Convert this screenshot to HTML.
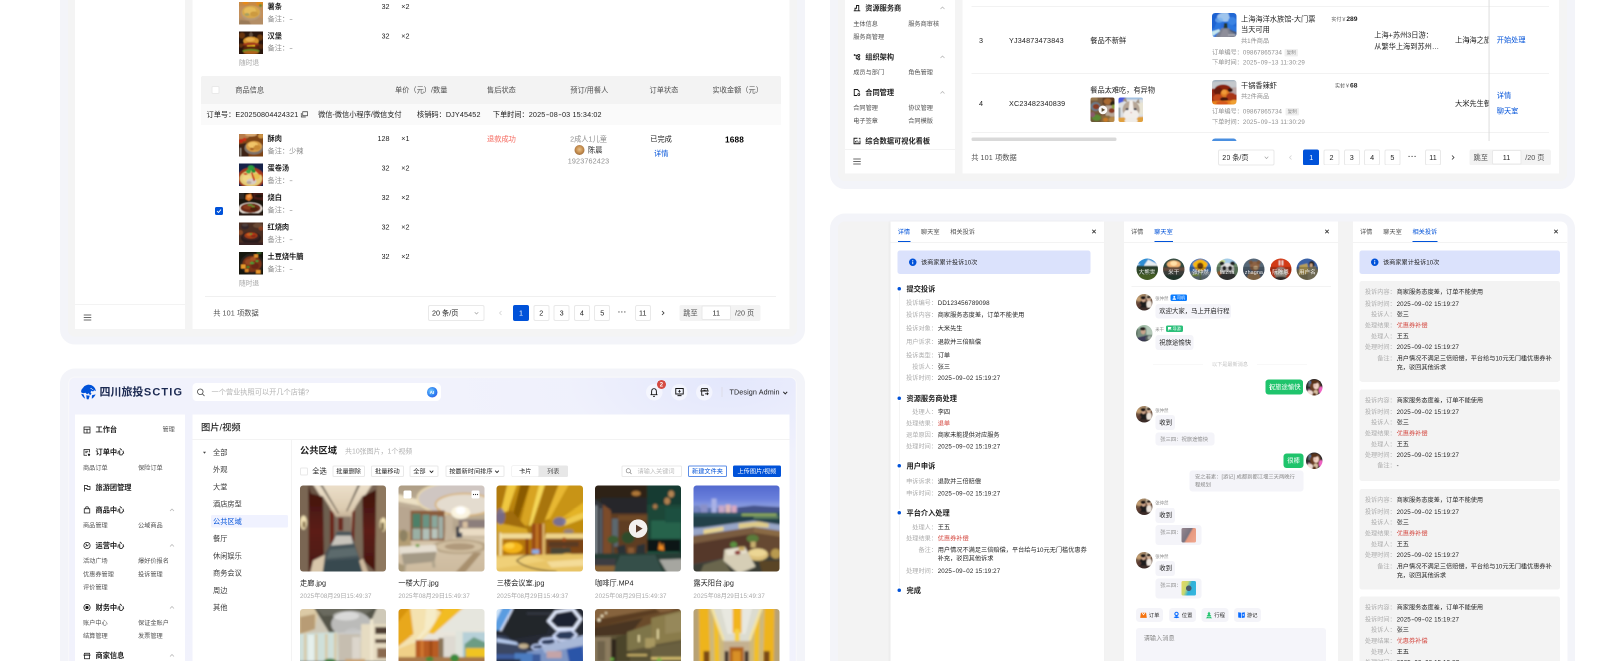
<!DOCTYPE html>
<html lang="zh-CN"><head><meta charset="utf-8"><title>UI</title><style>
html,body{margin:0;padding:0;background:#fff;}
body{width:1623px;height:661px;overflow:hidden;position:relative;font-family:"Liberation Sans","Noto Sans CJK SC",sans-serif;}
#s{will-change:transform;position:absolute;left:0;top:0;width:3246px;height:1322px;transform:scale(.5);transform-origin:0 0;overflow:hidden;}
.b{position:absolute;display:block;}
.t{position:absolute;white-space:nowrap;line-height:20px;}
.n{letter-spacing:.02em;}
.h{display:inline-block;width:.58em;text-align:center;transform:scaleX(1.5);letter-spacing:0;}
</style></head><body><svg width="0" height="0" style="position:absolute"><defs><filter id="bl" x="-5%" y="-5%" width="110%" height="110%"><feGaussianBlur stdDeviation="2.3"/></filter><filter id="bs" x="-5%" y="-5%" width="110%" height="110%"><feGaussianBlur stdDeviation="1.2"/></filter></defs></svg><div id="s">
<div class="b" style="left:120px;top:-100px;width:1490px;height:788.6px;background:#f4f4f4;border:16px solid #f3f4f9;border-radius:30px;box-sizing:border-box;"></div>
<div class="b" style="left:150px;top:-60px;width:219.5px;height:717.5px;background:#fff;"></div>
<div class="b" style="left:150px;top:608px;width:219.5px;height:2px;background:#f3f3f3;"></div>
<svg class="b" style="left:167px;top:627.5px;" width="16" height="14" viewBox="0 0 16 14"><path d="M0.5 2 H15.5 M0.5 7 H15.5 M0.5 12 H15.5" stroke="#3a3a3a" stroke-width="1.7" fill="none"/></svg>
<div class="b" style="left:385px;top:-60px;width:1193.5px;height:717.5px;background:#fff;"></div>
<svg class="b" style="left:478px;top:4px;" width="48" height="45" viewBox="0 0 48 45"><g filter="url(#bs)"><rect x="-6" y="-6" width="60" height="57" fill="#c4905a"/><rect x="-6" y="-6" width="60" height="14" fill="#c88a44"/><ellipse cx="13" cy="1" rx="6" ry="4" fill="#e88a18"/><ellipse cx="41" cy="3" rx="7" ry="5" fill="#e08a1c"/><ellipse cx="43" cy="7" rx="3" ry="3" fill="#6a8a30"/><rect x="-6" y="32" width="60" height="20" fill="#b48e66"/><ellipse cx="24" cy="22" rx="20" ry="15" fill="#b89a74"/><ellipse cx="24" cy="20" rx="18" ry="12.5" fill="#d8a84c"/><ellipse cx="22" cy="18" rx="12" ry="8" fill="#e6bc5c"/><ellipse cx="30" cy="24" rx="8" ry="5" fill="#cc9a40"/><ellipse cx="16" cy="25" rx="5" ry="3" fill="#a8a060"/><polygon points="2,36 20,38 24,45 0,45" fill="#9a7a58"/></g></svg>
<div class="t" style="left:535px;top:3px;font-size:14.42px;color:#1f1f1f;font-weight:600;">薯条</div>
<div class="t" style="left:535px;top:27.5px;font-size:14.42px;color:#909090;">备注：<span class="h">-</span></div>
<div class="t" style="left:779px;top:3px;font-size:14.42px;color:#1f1f1f;transform:translateX(-100%);">32</div>
<div class="t" style="left:802.5px;top:3px;font-size:14.42px;color:#1f1f1f;">×2</div>
<svg class="b" style="left:478px;top:62.5px;" width="48" height="45" viewBox="0 0 48 45"><g filter="url(#bs)"><rect x="-6" y="-6" width="60" height="57" fill="#2a1508"/><ellipse cx="6" cy="8" rx="6" ry="6" fill="#7a3e0c" fill-opacity="0.8"/><ellipse cx="42" cy="12" rx="6" ry="6" fill="#8a4a10" fill-opacity="0.7"/><ellipse cx="44" cy="30" rx="5" ry="5" fill="#6a3408" fill-opacity="0.7"/><ellipse cx="4" cy="28" rx="4" ry="4" fill="#7a400c" fill-opacity="0.7"/><polygon points="20,6 24,0 28,6 26,12 22,12" fill="#9a8a78" fill-opacity="0.5"/><ellipse cx="24" cy="19" rx="15.5" ry="8.5" fill="#d6922c"/><ellipse cx="22" cy="16" rx="9" ry="4" fill="#eab050"/><ellipse cx="24" cy="27" rx="17" ry="5" fill="#6e2a10"/><ellipse cx="24" cy="25" rx="16" ry="2.5" fill="#a83a1c"/><polygon points="16,28 32,27 30,36 26,34 24,40 21,33 18,36" fill="#f2c01e"/><ellipse cx="24" cy="34" rx="16" ry="4.5" fill="#5a2410"/><ellipse cx="24" cy="39" rx="17" ry="4" fill="#6a8a24"/><ellipse cx="24" cy="42" rx="15" ry="3.5" fill="#b0641e"/></g></svg>
<div class="t" style="left:535px;top:61.5px;font-size:14.42px;color:#1f1f1f;font-weight:600;">汉堡</div>
<div class="t" style="left:535px;top:86px;font-size:14.42px;color:#909090;">备注：<span class="h">-</span></div>
<div class="t" style="left:779px;top:61.5px;font-size:14.42px;color:#1f1f1f;transform:translateX(-100%);">32</div>
<div class="t" style="left:802.5px;top:61.5px;font-size:14.42px;color:#1f1f1f;">×2</div>
<div class="t" style="left:478px;top:116px;font-size:13.39px;color:#a6a6a6;">随时退</div>
<div class="b" style="left:402px;top:152px;width:1160px;height:56px;background:#f3f3f3;border-radius:4px 4px 0 0;"></div>
<div class="b" style="left:402px;top:208px;width:1160px;height:42px;background:#fafafa;"></div>
<div class="b" style="left:423px;top:172px;width:16px;height:16px;background:#fff;border:2px solid #e9e9e9;border-radius:3px;box-sizing:border-box;"></div>
<div class="t" style="left:470.5px;top:170px;font-size:14.42px;color:#505050;">商品信息</div>
<div class="t" style="left:790px;top:170px;font-size:14.42px;color:#505050;">单价（元）/数量</div>
<div class="t" style="left:974px;top:170px;font-size:14.42px;color:#505050;">售后状态</div>
<div class="t" style="left:1140.5px;top:170px;font-size:14.42px;color:#505050;">预订/用餐人</div>
<div class="t" style="left:1299px;top:170px;font-size:14.42px;color:#505050;">订单状态</div>
<div class="t" style="left:1425px;top:170px;font-size:14.42px;color:#505050;">实收金额（元）</div>
<div class="t" style="left:413px;top:218.6px;font-size:14.42px;color:#1f1f1f;">订单号：<span class="n">E20250804424321</span></div>
<svg class="b" style="left:601px;top:220.1px;" width="16" height="15" viewBox="0 0 16 15"><path d="M4.5 3.5 H14 V11.5 H4.5 Z M1.5 6 V14 H10.5" fill="none" stroke="#333" stroke-width="1.3"/></svg>
<div class="t" style="left:636px;top:218.6px;font-size:14.42px;color:#1f1f1f;">微信-微信小程序/微信支付</div>
<div class="t" style="left:834px;top:218.6px;font-size:14.42px;color:#1f1f1f;">核销码：<span class="n">DJY45452</span></div>
<div class="t" style="left:985.5px;top:218.6px;font-size:14.42px;color:#1f1f1f;">下单时间：<span class="n">2025<span class="h">-</span>08<span class="h">-</span>03 15:34:02</span></div>
<svg class="b" style="left:478px;top:268px;" width="48" height="45" viewBox="0 0 48 45"><g filter="url(#bs)"><rect x="-6" y="-6" width="60" height="57" fill="#7e4418"/><polygon points="-6,-6 30,-6 18,8 -6,12" fill="#b87c48"/><ellipse cx="24" cy="1" rx="12" ry="4" fill="#d8a870"/><ellipse cx="44" cy="4" rx="6" ry="5" fill="#e0a850" fill-opacity="0.8"/><ellipse cx="4" cy="14" rx="4" ry="4" fill="#c42a18"/><ellipse cx="11" cy="11" rx="3.5" ry="3.5" fill="#cc3018"/><polygon points="-6,22 14,18 20,45 -6,50" fill="#3c2412"/><ellipse cx="30" cy="28" rx="19" ry="13" fill="#7e746c"/><ellipse cx="30" cy="25" rx="16" ry="11" fill="#d89c44"/><ellipse cx="28" cy="22" rx="10" ry="6" fill="#f0c468"/><ellipse cx="36" cy="27" rx="7" ry="5" fill="#c88a34"/><ellipse cx="26" cy="30" rx="4" ry="2.5" fill="#a86424"/><rect x="2" y="28" width="2.5" height="16" fill="#b8b0a8" fill-opacity="0.8"/></g></svg>
<div class="t" style="left:535px;top:267px;font-size:14.42px;color:#1f1f1f;font-weight:600;">酥肉</div>
<div class="t" style="left:535px;top:291.5px;font-size:14.42px;color:#909090;">备注：少辣</div>
<div class="t" style="left:779px;top:267px;font-size:14.42px;color:#1f1f1f;transform:translateX(-100%);">128</div>
<div class="t" style="left:802.5px;top:267px;font-size:14.42px;color:#1f1f1f;">×1</div>
<svg class="b" style="left:478px;top:327px;" width="48" height="45" viewBox="0 0 48 45"><g filter="url(#bs)"><rect x="-6" y="-6" width="60" height="57" fill="#13234a"/><ellipse cx="24" cy="29" rx="27" ry="21" fill="#a23c1c"/><ellipse cx="24" cy="30" rx="22.5" ry="16" fill="#e6cc78"/><ellipse cx="16" cy="30" rx="9" ry="8" fill="#f0d884"/><ellipse cx="34" cy="26" rx="8" ry="6" fill="#e8c050"/><ellipse cx="25" cy="36" rx="10" ry="6" fill="#d6cec6"/><ellipse cx="20" cy="38" rx="5" ry="3" fill="#b8a8a0"/><ellipse cx="24" cy="9" rx="6.5" ry="5.5" fill="#2e9c3c"/><ellipse cx="19" cy="16" rx="5" ry="4" fill="#3aa844"/><ellipse cx="29" cy="15" rx="4" ry="3.5" fill="#249034"/><polygon points="24,18 27,18 32,34 29,35" fill="#c8281a"/><polygon points="32,14 35,13 44,22 41,23" fill="#c8301c"/><polygon points="8,20 14,19 18,22 12,23" fill="#d23a20"/></g></svg>
<div class="t" style="left:535px;top:326px;font-size:14.42px;color:#1f1f1f;font-weight:600;">蛋卷汤</div>
<div class="t" style="left:535px;top:350.5px;font-size:14.42px;color:#909090;">备注：<span class="h">-</span></div>
<div class="t" style="left:779px;top:326px;font-size:14.42px;color:#1f1f1f;transform:translateX(-100%);">32</div>
<div class="t" style="left:802.5px;top:326px;font-size:14.42px;color:#1f1f1f;">×2</div>
<svg class="b" style="left:478px;top:386px;" width="48" height="45" viewBox="0 0 48 45"><g filter="url(#bs)"><rect x="-6" y="-6" width="60" height="57" fill="#1f1410"/><polygon points="26,-6 54,-6 54,16 30,12" fill="#4a1a14"/><ellipse cx="40" cy="6" rx="8" ry="3" fill="#1a1210"/><rect x="0" y="0" width="10" height="12" fill="#3a3430" fill-opacity="0.7"/><polygon points="14,4 24,1 27,10 20,16 13,12" fill="#e07a2a"/><polygon points="16,5 23,3 24,8 18,10" fill="#f0a050"/><ellipse cx="23" cy="31" rx="24" ry="12" fill="#e6dcd2"/><ellipse cx="23" cy="30" rx="20" ry="9.5" fill="#6c2c14"/><ellipse cx="20" cy="28" rx="12" ry="5" fill="#8a3a1a"/><ellipse cx="30" cy="32" rx="8" ry="4" fill="#4e2010"/><ellipse cx="22" cy="24" rx="5" ry="2" fill="#5a8a30"/><ellipse cx="28" cy="27" rx="3" ry="1.5" fill="#6a9a34"/><rect x="-6" y="40" width="60" height="10" fill="#2a1c14"/></g></svg>
<div class="t" style="left:535px;top:385px;font-size:14.42px;color:#1f1f1f;font-weight:600;">烧白</div>
<div class="t" style="left:535px;top:409.5px;font-size:14.42px;color:#909090;">备注：<span class="h">-</span></div>
<div class="t" style="left:779px;top:385px;font-size:14.42px;color:#1f1f1f;transform:translateX(-100%);">32</div>
<div class="t" style="left:802.5px;top:385px;font-size:14.42px;color:#1f1f1f;">×2</div>
<svg class="b" style="left:478px;top:445px;" width="48" height="45" viewBox="0 0 48 45"><g filter="url(#bs)"><rect x="-6" y="-6" width="60" height="57" fill="#4c2e22"/><ellipse cx="12" cy="8" rx="8" ry="6" fill="#34282a"/><ellipse cx="12" cy="5" rx="6" ry="3" fill="#50403c"/><ellipse cx="38" cy="6" rx="10" ry="5" fill="#6a4a34"/><ellipse cx="44" cy="12" rx="5" ry="4" fill="#a84a20" fill-opacity="0.7"/><ellipse cx="2" cy="20" rx="6" ry="5" fill="#8a4a28"/><ellipse cx="24" cy="31" rx="20" ry="12" fill="#2a1c1a"/><ellipse cx="24" cy="28" rx="17" ry="8" fill="#3c2420"/><ellipse cx="24" cy="26" rx="13" ry="6.5" fill="#a23c18"/><ellipse cx="20" cy="24" rx="5" ry="3" fill="#c85a20"/><ellipse cx="29" cy="27" rx="5" ry="3" fill="#8a2c12"/><ellipse cx="24" cy="23" rx="3" ry="1.5" fill="#5a9a30"/><ellipse cx="28" cy="24" rx="2" ry="1.2" fill="#d82818"/><rect x="-6" y="40" width="60" height="10" fill="#382420"/></g></svg>
<div class="t" style="left:535px;top:444px;font-size:14.42px;color:#1f1f1f;font-weight:600;">红烧肉</div>
<div class="t" style="left:535px;top:468.5px;font-size:14.42px;color:#909090;">备注：<span class="h">-</span></div>
<div class="t" style="left:779px;top:444px;font-size:14.42px;color:#1f1f1f;transform:translateX(-100%);">32</div>
<div class="t" style="left:802.5px;top:444px;font-size:14.42px;color:#1f1f1f;">×2</div>
<svg class="b" style="left:478px;top:504px;" width="48" height="45" viewBox="0 0 48 45"><g filter="url(#bs)"><rect x="-6" y="-6" width="60" height="57" fill="#151310"/><ellipse cx="26" cy="24" rx="24" ry="21" fill="#26201c"/><ellipse cx="26" cy="24" rx="19" ry="16" fill="#7c3418"/><ellipse cx="20" cy="20" rx="8" ry="6" fill="#9a4a24"/><ellipse cx="32" cy="28" rx="8" ry="6" fill="#6a2812"/><ellipse cx="28" cy="14" rx="6" ry="4" fill="#a85428"/><rect x="4" y="25" width="9" height="8" fill="#e89a2a"/><rect x="30" y="5" width="8" height="6" fill="#e0902a"/><rect x="34" y="36" width="9" height="7" fill="#e8942a"/><rect x="12" y="34" width="7" height="6" fill="#d88424"/><ellipse cx="26" cy="22" rx="4" ry="2.5" fill="#4a9a34"/><ellipse cx="18" cy="30" rx="3" ry="2" fill="#3a8a2c"/><ellipse cx="36" cy="18" rx="3" ry="2" fill="#4a9a34"/><ellipse cx="40" cy="2" rx="5" ry="3" fill="#3a6a2a" fill-opacity="0.8"/></g></svg>
<div class="t" style="left:535px;top:503px;font-size:14.42px;color:#1f1f1f;font-weight:600;">土豆烧牛腩</div>
<div class="t" style="left:535px;top:527.5px;font-size:14.42px;color:#909090;">备注：<span class="h">-</span></div>
<div class="t" style="left:779px;top:503px;font-size:14.42px;color:#1f1f1f;transform:translateX(-100%);">32</div>
<div class="t" style="left:802.5px;top:503px;font-size:14.42px;color:#1f1f1f;">×2</div>
<div class="t" style="left:478px;top:557px;font-size:13.39px;color:#a6a6a6;">随时退</div>
<div class="b" style="left:430px;top:413.5px;width:16px;height:16px;background:#0052d9;border-radius:3px;"></div>
<svg class="b" style="left:430px;top:413.5px;" width="16" height="16" viewBox="0 0 16 16"><path d="M4 8.2 L7 11 L12 5.2" fill="none" stroke="#fff" stroke-width="1.8"/></svg>
<div class="t" style="left:974px;top:267.8px;font-size:14.42px;color:#f6685d;">退款成功</div>
<div class="t" style="left:1177px;top:267.8px;font-size:14.42px;color:#909090;transform:translateX(-50%);">2成人1儿童</div>
<div class="b" style="left:1148.5px;top:290px;width:20px;height:20px;background:radial-gradient(circle at 50% 45%,#e8c088 0%,#c89050 45%,#7a5030 100%);border-radius:50%;"></div>
<div class="t" style="left:1176px;top:290.2px;font-size:14.42px;color:#1f1f1f;">陈晨</div>
<div class="t" style="left:1177px;top:312.4px;font-size:14.42px;color:#909090;transform:translateX(-50%);"><span class="n">1923762423</span></div>
<div class="t" style="left:1300.5px;top:267.8px;font-size:14.42px;color:#1f1f1f;">已完成</div>
<div class="t" style="left:1308px;top:296.6px;font-size:14.42px;color:#0052d9;">详情</div>
<div class="t" style="left:1469px;top:268.6px;font-size:16.48px;color:#000;font-weight:600;transform:translateX(-50%);"><span class="n">1688</span></div>
<div class="b" style="left:410px;top:592px;width:1142px;height:2px;background:#f0f0f0;"></div>
<div class="t" style="left:426.5px;top:615.6px;font-size:14.42px;color:#505050;">共 <span class="n">101 </span>项数据</div>
<div class="b" style="left:856px;top:609.6px;width:113px;height:32px;background:#fff;border:2px solid #e9e9e9;border-radius:4px;box-sizing:border-box;"></div>
<div class="t" style="left:864px;top:615.6px;font-size:14.42px;color:#1f1f1f;">20 条/页</div>
<svg class="b" style="left:946.5px;top:620.1px;" width="12" height="12" viewBox="0 0 12 12"><path d="M2.4 4.32 L6 8.16 L9.6 4.32" fill="none" stroke="#999" stroke-width="1.3"/></svg>
<svg class="b" style="left:995px;top:619.6px;" width="12" height="12" viewBox="0 0 12 12"><path d="M8 2 L4 6 L8 10" fill="none" stroke="#d0d0d0" stroke-width="1.4"/></svg>
<div class="b" style="left:1026px;top:609.6px;width:32px;height:32px;background:#0052d9;border-radius:4px;"></div>
<div class="t" style="left:1042px;top:615.6px;font-size:14.42px;color:#fff;transform:translateX(-50%);">1</div>
<div class="b" style="left:1066.6px;top:609.6px;width:32px;height:32px;background:#fff;border:2px solid #e9e9e9;border-radius:4px;box-sizing:border-box;"></div>
<div class="t" style="left:1082.6px;top:615.6px;font-size:14.42px;color:#1f1f1f;transform:translateX(-50%);">2</div>
<div class="b" style="left:1107.2px;top:609.6px;width:32px;height:32px;background:#fff;border:2px solid #e9e9e9;border-radius:4px;box-sizing:border-box;"></div>
<div class="t" style="left:1123.2px;top:615.6px;font-size:14.42px;color:#1f1f1f;transform:translateX(-50%);">3</div>
<div class="b" style="left:1147.8px;top:609.6px;width:32px;height:32px;background:#fff;border:2px solid #e9e9e9;border-radius:4px;box-sizing:border-box;"></div>
<div class="t" style="left:1163.8px;top:615.6px;font-size:14.42px;color:#1f1f1f;transform:translateX(-50%);">4</div>
<div class="b" style="left:1188.4px;top:609.6px;width:32px;height:32px;background:#fff;border:2px solid #e9e9e9;border-radius:4px;box-sizing:border-box;"></div>
<div class="t" style="left:1204.4px;top:615.6px;font-size:14.42px;color:#1f1f1f;transform:translateX(-50%);">5</div>
<div class="t" style="left:1244.6px;top:614.1px;font-size:15.45px;color:#444;font-weight:700;transform:translateX(-50%);letter-spacing:0.8px;">···</div>
<div class="b" style="left:1269.6px;top:609.6px;width:32px;height:32px;background:#fff;border:2px solid #e9e9e9;border-radius:4px;box-sizing:border-box;"></div>
<div class="t" style="left:1285.6px;top:615.6px;font-size:14.42px;color:#1f1f1f;transform:translateX(-50%);">11</div>
<svg class="b" style="left:1320px;top:619.6px;" width="12" height="12" viewBox="0 0 12 12"><path d="M4 2 L8 6 L4 10" fill="none" stroke="#333" stroke-width="1.6"/></svg>
<div class="b" style="left:1358.6px;top:609.6px;width:162px;height:32px;background:#f3f3f3;border-radius:4px;"></div>
<div class="t" style="left:1366.6px;top:615.6px;font-size:14.42px;color:#505050;">跳至</div>
<div class="b" style="left:1403.1px;top:611.1px;width:59px;height:29px;background:#fff;border:2px solid #e9e9e9;border-radius:3px;box-sizing:border-box;"></div>
<div class="t" style="left:1432.6px;top:615.6px;font-size:14.42px;color:#1f1f1f;transform:translateX(-50%);">11</div>
<div class="t" style="left:1470.1px;top:615.6px;font-size:14.42px;color:#505050;">/20 页</div>
<div class="b" style="left:1659.5px;top:-100px;width:1490.5px;height:478px;background:#f4f4f4;border:16px solid #f3f4f9;border-radius:30px;box-sizing:border-box;"></div>
<div class="b" style="left:1690px;top:-60px;width:219.5px;height:407px;background:#fff;"></div>
<svg class="b" style="left:1706px;top:7.6px;" width="16" height="16" viewBox="0 0 16 16"><path d="M1.5 13.6 H14.5 M4 13 V8.5 H7 V3 H11.5 V13" fill="none" stroke="#161616" stroke-width="1.8"/></svg>
<div class="t" style="left:1730.5px;top:5.6px;font-size:14.42px;color:#1f1f1f;font-weight:600;">资源服务商</div>
<svg class="b" style="left:1878.5px;top:9.6px;" width="12" height="12" viewBox="0 0 12 12"><path d="M2 8 L6 4 L10 8" fill="none" stroke="#b0b0b0" stroke-width="1.3"/></svg>
<div class="t" style="left:1706.5px;top:38.1px;font-size:12.36px;color:#505050;">主体信息</div>
<div class="t" style="left:1816.5px;top:38.1px;font-size:12.36px;color:#505050;">服务商审核</div>
<div class="t" style="left:1706.5px;top:63.9px;font-size:12.36px;color:#505050;">服务商管理</div>
<svg class="b" style="left:1706px;top:105.6px;" width="16" height="16" viewBox="0 0 16 16"><circle cx="3.2" cy="4" r="1.8" fill="#161616"/><circle cx="11.5" cy="5" r="2.1" fill="none" stroke="#161616" stroke-width="1.7"/><circle cx="11.5" cy="11.5" r="2.1" fill="none" stroke="#161616" stroke-width="1.7"/><path d="M5 4.5 H9.3 M6.5 4.5 V11.5 H9.3" fill="none" stroke="#161616" stroke-width="1.6"/></svg>
<div class="t" style="left:1730.5px;top:103.6px;font-size:14.42px;color:#1f1f1f;font-weight:600;">组织架构</div>
<svg class="b" style="left:1878.5px;top:107.6px;" width="12" height="12" viewBox="0 0 12 12"><path d="M2 8 L6 4 L10 8" fill="none" stroke="#b0b0b0" stroke-width="1.3"/></svg>
<div class="t" style="left:1706.5px;top:134.9px;font-size:12.36px;color:#505050;">成员与部门</div>
<div class="t" style="left:1816.5px;top:134.9px;font-size:12.36px;color:#505050;">角色管理</div>
<svg class="b" style="left:1706px;top:176.8px;" width="16" height="16" viewBox="0 0 16 16"><path d="M8 14 H2.5 V2 H9 L12.5 5.5 V8" fill="none" stroke="#161616" stroke-width="1.8"/><circle cx="11.5" cy="12" r="2" fill="none" stroke="#161616" stroke-width="1.7"/></svg>
<div class="t" style="left:1730.5px;top:174.8px;font-size:14.42px;color:#1f1f1f;font-weight:600;">合同管理</div>
<svg class="b" style="left:1878.5px;top:178.8px;" width="12" height="12" viewBox="0 0 12 12"><path d="M2 8 L6 4 L10 8" fill="none" stroke="#b0b0b0" stroke-width="1.3"/></svg>
<div class="t" style="left:1706.5px;top:206.1px;font-size:12.36px;color:#505050;">合同管理</div>
<div class="t" style="left:1816.5px;top:206.1px;font-size:12.36px;color:#505050;">协议管理</div>
<div class="t" style="left:1706.5px;top:232.3px;font-size:12.36px;color:#505050;">电子签章</div>
<div class="t" style="left:1816.5px;top:232.3px;font-size:12.36px;color:#505050;">合同模版</div>
<svg class="b" style="left:1706px;top:273.6px;" width="16" height="16" viewBox="0 0 16 16"><path d="M9 2.5 H2 V13.5 H14 V7" fill="none" stroke="#161616" stroke-width="1.8"/><path d="M5 11 V8 M8 11 V6.5 M11 11 V9.5 M11.5 2.5 H14 V5" fill="none" stroke="#161616" stroke-width="1.6"/></svg>
<div class="t" style="left:1730.5px;top:271.6px;font-size:14.42px;color:#1f1f1f;font-weight:600;">综合数据可视化看板</div>
<div class="b" style="left:1690px;top:298px;width:219.5px;height:2px;background:#f3f3f3;"></div>
<svg class="b" style="left:1706px;top:315.6px;" width="16" height="14" viewBox="0 0 16 14"><path d="M0.5 2 H15.5 M0.5 7 H15.5 M0.5 12 H15.5" stroke="#3a3a3a" stroke-width="1.7" fill="none"/></svg>
<div class="b" style="left:1924.5px;top:-60px;width:1193px;height:407px;background:#fff;"></div>
<div class="b" style="left:0px;top:-60px;width:3246px;height:341.5px;overflow:hidden;"><div class="b" style="left:0px;top:60px;width:3246px;height:400px;"><div class="b" style="left:1942.5px;top:11.9px;width:1155px;height:2px;background:#f2f2f2;"></div>
<div class="b" style="left:1942.5px;top:146.1px;width:1155px;height:2px;background:#f2f2f2;"></div>
<div class="b" style="left:1942.5px;top:264.3px;width:1155px;height:2px;background:#f2f2f2;"></div>
<div class="t" style="left:1958px;top:71.2px;font-size:14.42px;color:#1f1f1f;">3</div>
<div class="t" style="left:2018px;top:71.2px;font-size:14.42px;color:#1f1f1f;letter-spacing:0.35px;">YJ34873473843</div>
<div class="t" style="left:2180.5px;top:71.2px;font-size:14.42px;color:#1f1f1f;">餐品不新鲜</div>
<svg class="b" style="left:2424px;top:25.8px;border-radius:6px;" width="48.5" height="48.5" viewBox="0 0 48 48"><g filter="url(#bs)"><rect x="-6" y="-6" width="60" height="60" fill="#2a76de"/><polygon points="-6,-6 20,-6 4,30 -6,34" fill="#1c62d2"/><ellipse cx="26" cy="8" rx="16" ry="9" fill="#b4d4f0" fill-opacity="0.85"/><ellipse cx="14" cy="14" rx="8" ry="5" fill="#78b0ee" fill-opacity="0.7"/><polygon points="30,-6 54,-6 54,30 40,24" fill="#2468d4"/><ellipse cx="40" cy="16" rx="8" ry="8" fill="#3a84e4"/><ellipse cx="22" cy="26" rx="5" ry="6" fill="#2c6ad8"/><polygon points="24,20 30,20 31,31 23,31" fill="#26382c"/><polygon points="19,30 33,30 54,50 2,54" fill="#7c808e"/><polygon points="22,32 30,32 36,50 14,50" fill="#8e8e9a"/><polygon points="-6,38 14,32 16,36 -6,50" fill="#c4e6ee"/><polygon points="34,32 54,40 54,46 36,36" fill="#4a5a7a"/><rect x="32" y="42" width="14" height="3" fill="#c8c8d0" fill-opacity="0.6"/></g></svg>
<div class="t" style="left:2482px;top:27.6px;font-size:14.42px;color:#1f1f1f;">上海海洋水族馆-大门票</div>
<div class="t" style="left:2482px;top:49.4px;font-size:14.42px;color:#1f1f1f;">当天可用</div>
<div class="t" style="left:2482px;top:71.7px;font-size:12.36px;color:#909090;">共1件商品</div>
<div class="t" style="left:2424px;top:95.3px;font-size:12.36px;color:#909090;">订单编号：<span class="n">09867865734</span></div>
<div class="b" style="left:2569px;top:97.5px;width:27px;height:15px;background:#f0f0f0;border-radius:2px;"></div>
<div class="t" style="left:2582.5px;top:95.3px;font-size:9.27px;color:#8a8a8a;transform:translateX(-50%);">复制</div>
<div class="t" style="left:2424px;top:114.7px;font-size:12.36px;color:#909090;">下单时间：<span class="n">2025<span class="h">-</span>09<span class="h">-</span>13 11:30:29</span></div>
<div class="t" style="left:2715px;top:28.1px;font-size:13.39px;color:#1f1f1f;transform:translateX(-100%);"><span style="font-size:10px;color:#555">实付￥</span><b style="font-weight:600">289</b></div>
<div class="t" style="left:2748.5px;top:60.2px;font-size:14.42px;color:#1f1f1f;">上海+苏州3日游：</div>
<div class="t" style="left:2748.5px;top:82.6px;font-size:14.42px;color:#1f1f1f;">从繁华上海到苏州…</div>
<div class="b" style="left:2910px;top:60px;width:67.5px;height:40px;overflow:hidden;"><div class="t" style="left:0px;top:10.4px;font-size:14.42px;color:#1f1f1f;">上海海之旅</div></div>
<div class="t" style="left:2993.5px;top:70.4px;font-size:14.42px;color:#0052d9;">开始处理</div>
<div class="t" style="left:1958px;top:197.2px;font-size:14.42px;color:#1f1f1f;">4</div>
<div class="t" style="left:2018px;top:197.2px;font-size:14.42px;color:#1f1f1f;letter-spacing:0.35px;">XC23482340839</div>
<div class="t" style="left:2180.5px;top:170.2px;font-size:14.42px;color:#1f1f1f;">餐品太难吃，有异物</div>
<svg class="b" style="left:2180.5px;top:195.4px;border-radius:4px;" width="48.5" height="48.5" viewBox="0 0 48 48"><g filter="url(#bs)"><rect x="-6" y="-6" width="60" height="60" fill="#7a5c3c"/><ellipse cx="10" cy="18" rx="10" ry="9" fill="#6a7e8c"/><ellipse cx="11" cy="18" rx="6.5" ry="5.5" fill="#8a3c24"/><rect x="24" y="-6" width="30" height="20" fill="#5a3a24"/><ellipse cx="34" cy="8" rx="8" ry="6" fill="#a86a30"/><ellipse cx="44" cy="12" rx="5" ry="5" fill="#2a2018"/><rect x="30" y="16" width="24" height="22" fill="#b8a89a"/><ellipse cx="42" cy="26" rx="6" ry="5" fill="#8a3a20"/><ellipse cx="46" cy="18" rx="4" ry="4" fill="#8aa040"/><rect x="-6" y="30" width="26" height="24" fill="#6a5a34"/><ellipse cx="12" cy="40" rx="9" ry="6" fill="#5a8a30"/><ellipse cx="4" cy="34" rx="5" ry="5" fill="#8a5a6a"/><rect x="22" y="36" width="16" height="18" fill="#8a6a3a"/><ellipse cx="44" cy="44" rx="8" ry="6" fill="#b88a4a"/><ellipse cx="30" cy="44" rx="5" ry="4" fill="#c87a28"/><rect x="-6" y="-6" width="20" height="12" fill="#9a7a50"/></g><circle cx="24.5" cy="24.5" r="8.6" fill="#fff" fill-opacity=".95"/><path d="M22 20.5 L29 24.5 L22 28.5 Z" fill="#5a4a30"/></svg>
<svg class="b" style="left:2237px;top:195.4px;border-radius:4px;" width="48.5" height="48.5" viewBox="0 0 48 48"><g filter="url(#bs)"><rect x="-6" y="-6" width="60" height="60" fill="#dcdfe2"/><polygon points="-6,-6 20,-6 10,8 -6,14" fill="#4a5ae0"/><polygon points="10,-6 54,-6 54,4 14,4" fill="#8ab4e0" fill-opacity="0.7"/><rect x="38" y="10" width="16" height="24" fill="#e8e4d4"/><rect x="-6" y="20" width="10" height="22" fill="#9aa4a8"/><polygon points="-6,40 54,38 54,54 -6,54" fill="#e0a03c"/><ellipse cx="25" cy="24" rx="17" ry="17" fill="#b6a696"/><polygon points="8,6 14,0 18,10" fill="#a09080"/><polygon points="34,10 40,2 42,12" fill="#a09080"/><ellipse cx="25" cy="34" rx="15" ry="12" fill="#f2eeea"/><polygon points="22,6 28,6 30,26 20,26" fill="#f4f0ec"/><ellipse cx="25" cy="46" rx="13" ry="6" fill="#f0ece6"/><ellipse cx="17" cy="23" rx="3" ry="2" fill="#3a3c48"/><ellipse cx="33" cy="23" rx="3" ry="2" fill="#3a3c48"/><ellipse cx="25" cy="30" rx="1.6" ry="1" fill="#d08a8a"/></g></svg>
<svg class="b" style="left:2424px;top:160px;border-radius:6px;" width="48.5" height="48.5" viewBox="0 0 48 48"><g filter="url(#bs)"><rect x="-6" y="-6" width="60" height="60" fill="#9a2c14"/><rect x="-6" y="-6" width="60" height="14" fill="#a4b4c0"/><polygon points="-6,4 54,2 54,14 -6,18" fill="#c4c8cc"/><polygon points="30,16 54,10 54,28 38,30" fill="#c0c4c8" fill-opacity="0.8"/><ellipse cx="22" cy="18" rx="16" ry="9" fill="#8a2410"/><ellipse cx="12" cy="22" rx="9" ry="8" fill="#6a1a0e"/><ellipse cx="26" cy="27" rx="9" ry="8" fill="#e07a24"/><ellipse cx="24" cy="24" rx="5" ry="5" fill="#f09a38"/><ellipse cx="38" cy="34" rx="10" ry="9" fill="#a83418"/><ellipse cx="36" cy="20" rx="5" ry="4" fill="#3a1210"/><ellipse cx="12" cy="36" rx="10" ry="8" fill="#c24a1a"/><ellipse cx="24" cy="38" rx="8" ry="4" fill="#4a1810"/><polygon points="-6,42 54,40 54,54 -6,54" fill="#e8821e"/><ellipse cx="20" cy="46" rx="12" ry="4" fill="#d8581a"/><ellipse cx="44" cy="44" rx="8" ry="5" fill="#f0a030"/></g></svg>
<div class="t" style="left:2482px;top:160.8px;font-size:14.42px;color:#1f1f1f;">干锅香辣虾</div>
<div class="t" style="left:2482px;top:182.5px;font-size:12.36px;color:#909090;">共2件商品</div>
<div class="t" style="left:2424px;top:213.3px;font-size:12.36px;color:#909090;">订单编号：<span class="n">09867865734</span></div>
<div class="b" style="left:2571px;top:215.5px;width:27px;height:15px;background:#f0f0f0;border-radius:2px;"></div>
<div class="t" style="left:2584.5px;top:213.3px;font-size:9.27px;color:#8a8a8a;transform:translateX(-50%);">复制</div>
<div class="t" style="left:2424px;top:233.5px;font-size:12.36px;color:#909090;">下单时间：<span class="n">2025<span class="h">-</span>09<span class="h">-</span>13 11:30:29</span></div>
<div class="t" style="left:2715px;top:161.3px;font-size:13.39px;color:#1f1f1f;transform:translateX(-100%);"><span style="font-size:10px;color:#555">实付￥</span><b style="font-weight:600">68</b></div>
<div class="b" style="left:2910px;top:187px;width:67.5px;height:40px;overflow:hidden;"><div class="t" style="left:0px;top:10px;font-size:14.42px;color:#1f1f1f;">大米先生餐厅</div></div>
<div class="t" style="left:2993.5px;top:181.2px;font-size:14.42px;color:#0052d9;">详情</div>
<div class="t" style="left:2993.5px;top:212px;font-size:14.42px;color:#0052d9;">聊天室</div>
<div class="b" style="left:2424px;top:277px;width:48.5px;height:48.5px;background:#4a8fe0;border-radius:6px;"></div>
<div class="b" style="left:2977px;top:-20px;width:2px;height:302px;background:linear-gradient(90deg,#e4e4e4,#d6d6d6);"></div>
<div class="b" style="left:1942.5px;top:275px;width:290px;height:6.5px;background:#d9d9d9;border-radius:3px;"></div></div></div>
<div class="t" style="left:1942.5px;top:304.6px;font-size:14.42px;color:#505050;">共 <span class="n">101 </span>项数据</div>
<div class="b" style="left:2436.4px;top:298.6px;width:113px;height:32px;background:#fff;border:2px solid #e9e9e9;border-radius:4px;box-sizing:border-box;"></div>
<div class="t" style="left:2444.4px;top:304.6px;font-size:14.42px;color:#1f1f1f;">20 条/页</div>
<svg class="b" style="left:2526.9px;top:309.1px;" width="12" height="12" viewBox="0 0 12 12"><path d="M2.4 4.32 L6 8.16 L9.6 4.32" fill="none" stroke="#999" stroke-width="1.3"/></svg>
<svg class="b" style="left:2575.4px;top:308.6px;" width="12" height="12" viewBox="0 0 12 12"><path d="M8 2 L4 6 L8 10" fill="none" stroke="#d0d0d0" stroke-width="1.4"/></svg>
<div class="b" style="left:2606.4px;top:298.6px;width:32px;height:32px;background:#0052d9;border-radius:4px;"></div>
<div class="t" style="left:2622.4px;top:304.6px;font-size:14.42px;color:#fff;transform:translateX(-50%);">1</div>
<div class="b" style="left:2647px;top:298.6px;width:32px;height:32px;background:#fff;border:2px solid #e9e9e9;border-radius:4px;box-sizing:border-box;"></div>
<div class="t" style="left:2663px;top:304.6px;font-size:14.42px;color:#1f1f1f;transform:translateX(-50%);">2</div>
<div class="b" style="left:2687.6px;top:298.6px;width:32px;height:32px;background:#fff;border:2px solid #e9e9e9;border-radius:4px;box-sizing:border-box;"></div>
<div class="t" style="left:2703.6px;top:304.6px;font-size:14.42px;color:#1f1f1f;transform:translateX(-50%);">3</div>
<div class="b" style="left:2728.2px;top:298.6px;width:32px;height:32px;background:#fff;border:2px solid #e9e9e9;border-radius:4px;box-sizing:border-box;"></div>
<div class="t" style="left:2744.2px;top:304.6px;font-size:14.42px;color:#1f1f1f;transform:translateX(-50%);">4</div>
<div class="b" style="left:2768.8px;top:298.6px;width:32px;height:32px;background:#fff;border:2px solid #e9e9e9;border-radius:4px;box-sizing:border-box;"></div>
<div class="t" style="left:2784.8px;top:304.6px;font-size:14.42px;color:#1f1f1f;transform:translateX(-50%);">5</div>
<div class="t" style="left:2825px;top:303.1px;font-size:15.45px;color:#444;font-weight:700;transform:translateX(-50%);letter-spacing:0.8px;">···</div>
<div class="b" style="left:2850px;top:298.6px;width:32px;height:32px;background:#fff;border:2px solid #e9e9e9;border-radius:4px;box-sizing:border-box;"></div>
<div class="t" style="left:2866px;top:304.6px;font-size:14.42px;color:#1f1f1f;transform:translateX(-50%);">11</div>
<svg class="b" style="left:2900.4px;top:308.6px;" width="12" height="12" viewBox="0 0 12 12"><path d="M4 2 L8 6 L4 10" fill="none" stroke="#333" stroke-width="1.6"/></svg>
<div class="b" style="left:2939px;top:298.6px;width:162px;height:32px;background:#f3f3f3;border-radius:4px;"></div>
<div class="t" style="left:2947px;top:304.6px;font-size:14.42px;color:#505050;">跳至</div>
<div class="b" style="left:2983.5px;top:300.1px;width:59px;height:29px;background:#fff;border:2px solid #e9e9e9;border-radius:3px;box-sizing:border-box;"></div>
<div class="t" style="left:3013px;top:304.6px;font-size:14.42px;color:#1f1f1f;transform:translateX(-50%);">11</div>
<div class="t" style="left:3050.5px;top:304.6px;font-size:14.42px;color:#505050;">/20 页</div>
<div class="b" style="left:120px;top:736.6px;width:1490px;height:700px;background:radial-gradient(ellipse 520px 260px at 1330px 20px,rgba(226,230,252,.9) 0%,rgba(238,240,253,.5) 60%,rgba(243,243,253,0) 100%),linear-gradient(180deg,#f1f2fc 0%,#f2f2fc 100%);border:16px solid #f3f4f9;border-radius:30px;box-sizing:border-box;background-origin:border-box;"></div>
<div class="b" style="left:136px;top:752.6px;width:1458px;height:700px;border-radius:14px;box-shadow:inset 0 0 0 2.5px #f8f8fa;"></div>
<svg class="b" style="left:161.5px;top:769px;" width="30" height="30" viewBox="0 0 30 30"><defs><clipPath id="gc"><circle cx="15" cy="15" r="14.8"/></clipPath></defs><g clip-path="url(#gc)" fill="#0052d9"><polygon points="2,9 7,3 14,0 23,1 28,5 30,10 30,13.5 26.5,11.5 24,14 21,12.5 19,15.5 21,18.5 18,21.5 15.5,17.5 12,19.5 9,16.5 4,17.5 0,15.5 0,11"/><polygon points="0,18.5 5,19.8 8.5,29 4,27 0,22"/><polygon points="10.5,21.5 17.5,22.5 15,30 11.5,30"/><polygon points="22,21.5 30,19.5 28,24.5 23.5,29.5 21.5,28.5"/></g><ellipse cx="20.3" cy="8.3" rx="1.5" ry="1.1" fill="#f2f2fc"/><ellipse cx="23.4" cy="9.8" rx="1.2" ry="0.9" fill="#f2f2fc"/></svg>
<div class="t" style="left:199px;top:774.6px;font-size:21.94px;color:#1c2a52;font-weight:700;line-height:28px;top:770.2px;">四川旅投<span style="letter-spacing:2.3px;margin-left:1px;">SCTIG</span></div>
<div class="b" style="left:384.5px;top:766px;width:496.5px;height:36px;background:#fff;border-radius:8px;"></div>
<svg class="b" style="left:393px;top:776px;" width="18" height="18" viewBox="0 0 18 18"><circle cx="7.6" cy="7.6" r="5.6" fill="none" stroke="#444" stroke-width="1.5"/><path d="M11.8 11.8 L16 16" stroke="#444" stroke-width="1.6"/></svg>
<div class="t" style="left:423px;top:774.4px;font-size:14.42px;color:#b4b4b4;">一个营业执照可以开几个店铺?</div>
<div class="b" style="left:853.5px;top:773.5px;width:21px;height:21px;background:radial-gradient(circle at 40% 40%,#7ad0ff 0%,#2a7cf0 55%,#5a4ae0 100%);border-radius:50%;"></div>
<div class="t" style="left:864px;top:774.9px;font-size:9.27px;color:#fff;font-weight:700;transform:translateX(-50%);">AI</div>
<div class="b" style="left:1291.5px;top:767.5px;width:33px;height:33px;background:rgba(255,255,255,.5);border-radius:50%;"></div>
<div class="b" style="left:1342px;top:767.5px;width:33px;height:33px;background:rgba(255,255,255,.5);border-radius:50%;"></div>
<div class="b" style="left:1392px;top:767.5px;width:33px;height:33px;background:rgba(255,255,255,.5);border-radius:50%;"></div>
<svg class="b" style="left:1298px;top:773.5px;" width="20" height="21" viewBox="0 0 20 21"><path d="M5.2 15.2 V9.2 Q5.2 3.4 10 3.4 Q14.8 3.4 14.8 9.2 V15.2 M3 15.4 H17 M8 18.6 H12" fill="none" stroke="#161616" stroke-width="1.9"/></svg>
<div class="b" style="left:1313.5px;top:759.5px;width:18.5px;height:18.5px;background:#d54941;border-radius:50%;"></div>
<div class="t" style="left:1322.7px;top:758.8px;font-size:11.85px;color:#fff;font-weight:700;transform:translateX(-50%);">2</div>
<svg class="b" style="left:1349.5px;top:775px;" width="18" height="18" viewBox="0 0 18 18"><path d="M1.5 2 H16.5 V13 H1.5 Z M5 16.3 H13" fill="none" stroke="#161616" stroke-width="1.9"/><path d="M9 4.8 V10.2 M6.3 7.5 H11.7" fill="none" stroke="#161616" stroke-width="1.7"/></svg>
<svg class="b" style="left:1399.5px;top:775px;" width="18" height="18" viewBox="0 0 18 18"><path d="M1.8 7 L3.3 2.2 H14.7 L16.2 7 Z M3.4 7.5 V15.4 H8 M6.3 7 V4.5 M9 7 V4.5 M11.7 7 V4.5" fill="none" stroke="#161616" stroke-width="1.8"/><path d="M10 12.6 H16.2 M14 10.2 L16.4 12.6 L14 15" fill="none" stroke="#161616" stroke-width="1.7"/></svg>
<div class="b" style="left:1442.5px;top:774px;width:2px;height:20px;background:#dddde8;"></div>
<div class="t" style="left:1459px;top:774px;font-size:14.42px;color:#1f1f1f;letter-spacing:0.2px;">TDesign Admin</div>
<svg class="b" style="left:1563.5px;top:779px;" width="13" height="13" viewBox="0 0 13 13"><path d="M2.6 4.68 L6.5 8.84 L10.4 4.68" fill="none" stroke="#222" stroke-width="2"/></svg>
<div class="b" style="left:150px;top:829px;width:219.5px;height:600px;background:#fff;"></div>
<svg class="b" style="left:166px;top:851.8px;" width="16" height="16" viewBox="0 0 16 16"><path d="M2 2 H14 V14 H2 Z M2 6.5 H14 M8 6.5 V14" fill="none" stroke="#161616" stroke-width="1.5"/></svg>
<div class="t" style="left:191px;top:849.3px;font-size:14.42px;color:#1f1f1f;font-weight:600;">工作台</div>
<div class="t" style="left:325px;top:849.3px;font-size:12.36px;color:#505050;">管理</div>
<svg class="b" style="left:166px;top:896.6px;" width="16" height="16" viewBox="0 0 16 16"><path d="M8 13.5 H2 V2 H13 V8 M4.5 5.5 H10.5 M4.5 8.5 H8.5" fill="none" stroke="#161616" stroke-width="1.5"/><circle cx="12" cy="12.5" r="2.3" fill="#161616"/></svg>
<div class="t" style="left:191px;top:894.1px;font-size:14.42px;color:#1f1f1f;font-weight:600;">订单中心</div>
<div class="t" style="left:166px;top:925.5px;font-size:12.36px;color:#505050;">商品订单</div>
<div class="t" style="left:276px;top:925.5px;font-size:12.36px;color:#505050;">保险订单</div>
<svg class="b" style="left:166px;top:967.6px;" width="16" height="16" viewBox="0 0 16 16"><path d="M3 15 V2 M3 3 H9 V5 H14 V11 H8 V9 H3" fill="none" stroke="#161616" stroke-width="1.5"/></svg>
<div class="t" style="left:191px;top:965.1px;font-size:14.42px;color:#1f1f1f;font-weight:600;">旅游团管理</div>
<svg class="b" style="left:166px;top:1012.4px;" width="16" height="16" viewBox="0 0 16 16"><path d="M2.5 5.5 H13.5 V14 H2.5 Z M5.5 5.5 V3 Q5.5 1.5 8 1.5 Q10.5 1.5 10.5 3 V5.5" fill="none" stroke="#161616" stroke-width="1.5"/></svg>
<div class="t" style="left:191px;top:1009.9px;font-size:14.42px;color:#1f1f1f;font-weight:600;">商品中心</div>
<svg class="b" style="left:338px;top:1013.9px;" width="12" height="12" viewBox="0 0 12 12"><path d="M2 8 L6 4 L10 8" fill="none" stroke="#b0b0b0" stroke-width="1.3"/></svg>
<div class="t" style="left:166px;top:1040.5px;font-size:12.36px;color:#505050;">商品管理</div>
<div class="t" style="left:276px;top:1040.5px;font-size:12.36px;color:#505050;">公域商品</div>
<svg class="b" style="left:166px;top:1083px;" width="16" height="16" viewBox="0 0 16 16"><circle cx="8" cy="8" r="6.3" fill="none" stroke="#161616" stroke-width="1.5"/><path d="M5 10.5 L7.5 7.5 L9 9 L11 6 M5 5.5 H8" fill="none" stroke="#161616" stroke-width="1.3"/></svg>
<div class="t" style="left:191px;top:1080.5px;font-size:14.42px;color:#1f1f1f;font-weight:600;">运营中心</div>
<svg class="b" style="left:338px;top:1084.5px;" width="12" height="12" viewBox="0 0 12 12"><path d="M2 8 L6 4 L10 8" fill="none" stroke="#b0b0b0" stroke-width="1.3"/></svg>
<div class="t" style="left:166px;top:1111.7px;font-size:12.36px;color:#505050;">活动广场</div>
<div class="t" style="left:276px;top:1111.7px;font-size:12.36px;color:#505050;">爆好价报名</div>
<div class="t" style="left:166px;top:1138.5px;font-size:12.36px;color:#505050;">优惠券管理</div>
<div class="t" style="left:276px;top:1138.5px;font-size:12.36px;color:#505050;">投诉管理</div>
<div class="t" style="left:166px;top:1164.9px;font-size:12.36px;color:#505050;">评价管理</div>
<svg class="b" style="left:166px;top:1207.2px;" width="16" height="16" viewBox="0 0 16 16"><circle cx="8" cy="8" r="6.3" fill="none" stroke="#161616" stroke-width="1.5"/><circle cx="8" cy="8" r="3.2" fill="#161616"/></svg>
<div class="t" style="left:191px;top:1204.7px;font-size:14.42px;color:#1f1f1f;font-weight:600;">财务中心</div>
<svg class="b" style="left:338px;top:1208.7px;" width="12" height="12" viewBox="0 0 12 12"><path d="M2 8 L6 4 L10 8" fill="none" stroke="#b0b0b0" stroke-width="1.3"/></svg>
<div class="t" style="left:166px;top:1236.1px;font-size:12.36px;color:#505050;">账户中心</div>
<div class="t" style="left:276px;top:1236.1px;font-size:12.36px;color:#505050;">保证金账户</div>
<div class="t" style="left:166px;top:1262.3px;font-size:12.36px;color:#505050;">结算管理</div>
<div class="t" style="left:276px;top:1262.3px;font-size:12.36px;color:#505050;">发票管理</div>
<svg class="b" style="left:166px;top:1303.8px;" width="16" height="16" viewBox="0 0 16 16"><path d="M2 6.5 L3 2.5 H13 L14 6.5 Z M3 6.5 V13.5 H13 V6.5 M6 6.5 V4 M10 6.5 V4" fill="none" stroke="#161616" stroke-width="1.5"/></svg>
<div class="t" style="left:191px;top:1301.3px;font-size:14.42px;color:#1f1f1f;font-weight:600;">商家信息</div>
<svg class="b" style="left:338px;top:1305.3px;" width="12" height="12" viewBox="0 0 12 12"><path d="M2 8 L6 4 L10 8" fill="none" stroke="#b0b0b0" stroke-width="1.3"/></svg>
<div class="b" style="left:384.5px;top:829px;width:1194px;height:600px;background:#fff;"></div>
<div class="t" style="left:402px;top:845px;font-size:18.54px;color:#1f1f1f;font-weight:500;line-height:26px;top:842px;">图片/视频</div>
<div class="b" style="left:384.5px;top:878px;width:1194px;height:2px;background:#f3f3f3;"></div>
<div class="b" style="left:582px;top:878px;width:2px;height:500px;background:#f3f3f3;"></div>
<svg class="b" style="left:405px;top:901px;" width="8" height="8" viewBox="0 0 8 8"><path d="M1 2.5 H7 L4 6.5 Z" fill="#444"/></svg>
<div class="t" style="left:426px;top:894.5px;font-size:14.42px;color:#3c3c3c;">全部</div>
<div class="t" style="left:426px;top:929px;font-size:14.42px;color:#3c3c3c;">外观</div>
<div class="t" style="left:426px;top:963.5px;font-size:14.42px;color:#3c3c3c;">大堂</div>
<div class="t" style="left:426px;top:998px;font-size:14.42px;color:#3c3c3c;">酒店房型</div>
<div class="b" style="left:421.5px;top:1029.7px;width:154.5px;height:25.6px;background:#f0f2ff;border-radius:3px;"></div>
<div class="t" style="left:426px;top:1032.5px;font-size:14.42px;color:#0052d9;">公共区域</div>
<div class="t" style="left:426px;top:1067px;font-size:14.42px;color:#3c3c3c;">餐厅</div>
<div class="t" style="left:426px;top:1101.5px;font-size:14.42px;color:#3c3c3c;">休闲娱乐</div>
<div class="t" style="left:426px;top:1136px;font-size:14.42px;color:#3c3c3c;">商务会议</div>
<div class="t" style="left:426px;top:1170.5px;font-size:14.42px;color:#3c3c3c;">周边</div>
<div class="t" style="left:426px;top:1205px;font-size:14.42px;color:#3c3c3c;">其他</div>
<div class="t" style="left:600px;top:891px;font-size:18.54px;color:#1f1f1f;font-weight:700;line-height:26px;top:888px;">公共区域</div>
<div class="t" style="left:690px;top:892px;font-size:13.91px;color:#b0b0b0;">共10张图片，1个视频</div>
<div class="b" style="left:600px;top:934.5px;width:16px;height:16px;background:#fff;border:2px solid #e9e9e9;border-radius:3px;box-sizing:border-box;"></div>
<div class="t" style="left:624.5px;top:931.5px;font-size:14.42px;color:#1f1f1f;">全选</div>
<div class="b" style="left:664.5px;top:930.75px;width:65.5px;height:23.5px;background:#fff;border:2px solid #e9e9e9;border-radius:3px;box-sizing:border-box;"></div>
<div class="t" style="left:697.25px;top:933px;font-size:12.36px;color:#1f1f1f;transform:translateX(-50%);">批量删除</div>
<div class="b" style="left:742px;top:930.75px;width:65.5px;height:23.5px;background:#fff;border:2px solid #e9e9e9;border-radius:3px;box-sizing:border-box;"></div>
<div class="t" style="left:774.75px;top:933px;font-size:12.36px;color:#1f1f1f;transform:translateX(-50%);">批量移动</div>
<div class="b" style="left:818.5px;top:930.75px;width:58.5px;height:23.5px;background:#fff;border:2px solid #e9e9e9;border-radius:3px;box-sizing:border-box;"></div>
<div class="t" style="left:826.5px;top:933px;font-size:12.36px;color:#1f1f1f;">全部</div>
<svg class="b" style="left:857px;top:937px;" width="12" height="12" viewBox="0 0 12 12"><path d="M2.4 4.32 L6 8.16 L9.6 4.32" fill="none" stroke="#222" stroke-width="1.7"/></svg>
<div class="b" style="left:890.5px;top:930.75px;width:118.5px;height:23.5px;background:#fff;border:2px solid #e9e9e9;border-radius:3px;box-sizing:border-box;"></div>
<div class="t" style="left:898.5px;top:933px;font-size:12.36px;color:#1f1f1f;">按最新时间排序</div>
<svg class="b" style="left:988px;top:937px;" width="12" height="12" viewBox="0 0 12 12"><path d="M2.4 4.32 L6 8.16 L9.6 4.32" fill="none" stroke="#222" stroke-width="1.7"/></svg>
<div class="b" style="left:1022.5px;top:930.7px;width:113.5px;height:23.6px;background:#e7e7e7;border-radius:3px;"></div>
<div class="b" style="left:1024px;top:932.2px;width:53px;height:20.6px;background:#fff;border-radius:2px;"></div>
<div class="t" style="left:1050.5px;top:933px;font-size:12.36px;color:#1f1f1f;transform:translateX(-50%);">卡片</div>
<div class="t" style="left:1106.5px;top:933px;font-size:12.36px;color:#505050;transform:translateX(-50%);">列表</div>
<div class="b" style="left:1242.5px;top:930.7px;width:121.5px;height:23.6px;background:#fff;border:2px solid #e9e9e9;border-radius:3px;box-sizing:border-box;"></div>
<svg class="b" style="left:1251px;top:936px;" width="13" height="13" viewBox="0 0 13 13"><circle cx="5.6" cy="5.6" r="4.3" fill="none" stroke="#777" stroke-width="1.2"/><path d="M8.8 8.8 L12 12" stroke="#777" stroke-width="1.3"/></svg>
<div class="t" style="left:1275px;top:933px;font-size:12.36px;color:#bcbcbc;">请输入关键词</div>
<div class="b" style="left:1376px;top:930.75px;width:78px;height:23.5px;background:#fff;border:2px solid #5c8de6;border-radius:3px;box-sizing:border-box;"></div>
<div class="t" style="left:1415px;top:933px;font-size:12.36px;color:#0052d9;transform:translateX(-50%);">新建文件夹</div>
<div class="b" style="left:1466px;top:930.75px;width:95.5px;height:23.5px;background:#0052d9;border:2px solid #0052d9;border-radius:3px;box-sizing:border-box;"></div>
<div class="t" style="left:1513.75px;top:933px;font-size:12.36px;color:#fff;transform:translateX(-50%);">上传图片/视频</div>
<svg class="b" style="left:600px;top:970.6px;border-radius:6px;" width="172.4" height="172.4" viewBox="0 0 172 172" preserveAspectRatio="none"><defs><linearGradient id="h0a" x1="0" y1="0" x2="0" y2="1"><stop offset="0" stop-color="#efe4d0"/><stop offset="0.3" stop-color="#dccbb0"/><stop offset="0.48" stop-color="#a89078"/><stop offset="0.56" stop-color="#5a5a5c"/><stop offset="1" stop-color="#3c4a50"/></linearGradient><linearGradient id="h0b" x1="0" y1="0" x2="0" y2="1"><stop offset="0" stop-color="#3e140e"/><stop offset="0.5" stop-color="#5c1e16"/><stop offset="1" stop-color="#46160f"/></linearGradient></defs><g filter="url(#bl)"><rect x="-12" y="-12" width="196" height="196" fill="url(#h0a)"/><polygon points="-12,-12 20,-12 64,58 66,100 30,184 -12,184" fill="#6c5646"/><polygon points="-12,-12 16,-12 18,184 -12,184" fill="#7a6652"/><polygon points="17,0 22,16 46,22 48,140 24,168 18,184 17,184" fill="url(#h0b)"/><polygon points="46,22 60,44 60,118 48,140" fill="#6e5e50"/><polygon points="60,46 68,56 68,108 60,118" fill="#6a2418"/><polygon points="68,58 74,64 74,100 68,108" fill="#78685a"/><polygon points="184,-12 150,-12 106,58 104,104 130,184 184,184" fill="#7a6654"/><polygon points="158,-12 184,-12 184,184 150,184 152,10" fill="#8e785e"/><polygon points="152,8 124,22 126,150 150,172" fill="url(#h0b)"/><polygon points="124,22 110,44 108,114 126,150" fill="#7a6a58"/><polygon points="110,46 104,54 103,104 108,114" fill="#6a2418"/><rect x="74" y="62" width="28" height="30" fill="#8a7a6a"/><rect x="76" y="64" width="10" height="26" fill="#6a2a20"/><polygon points="40,-2 44,-2 78,56 76,56" fill="#3a3028"/><polygon points="120,-2 116,-2 92,52 94,52" fill="#3a3028"/><polygon points="74,92 100,92 132,184 36,184" fill="#46545a"/><polygon points="72,100 102,100 106,116 62,120" fill="#c8c4bc"/><polygon points="60,128 110,124 116,140 52,146" fill="#5c6a6c"/><polygon points="52,150 120,146 128,184 40,184" fill="#384850"/><polygon points="26,150 50,138 44,184 18,184" fill="#d8c6aa"/><polygon points="118,150 128,184 140,184 126,146" fill="#cdb89c"/><ellipse cx="7" cy="74" rx="7" ry="14" fill="#fff0c0" fill-opacity="0.9"/><ellipse cx="166" cy="78" rx="7" ry="14" fill="#fff0c0" fill-opacity="0.9"/><rect x="5" y="72" width="6" height="12" fill="#5a4420" fill-opacity="0.7"/><rect x="161" y="74" width="7" height="16" fill="#4a3a20" fill-opacity="0.7"/></g></svg>
<div class="t" style="left:600px;top:1156.3px;font-size:14.42px;color:#1f1f1f;">走廊.jpg</div>
<div class="t" style="left:600px;top:1181.8px;font-size:12.36px;color:#a8a8a8;"><span class="n">2025</span>年08月29日<span class="n">15:49:37</span></div>
<svg class="b" style="left:796.7px;top:970.6px;border-radius:6px;" width="172.4" height="172.4" viewBox="0 0 172 172" preserveAspectRatio="none"><defs><linearGradient id="h1a" x1="0" y1="0" x2="0" y2="1"><stop offset="0" stop-color="#a89880"/><stop offset="0.28" stop-color="#c0b098"/><stop offset="0.5" stop-color="#b4a48c"/><stop offset="0.62" stop-color="#d6c6ac"/><stop offset="1" stop-color="#cbb89c"/></linearGradient></defs><g filter="url(#bl)"><rect x="-12" y="-12" width="196" height="196" fill="url(#h1a)"/><polygon points="-12,14 60,34 60,44 -12,30" fill="#ece0c4"/><ellipse cx="124" cy="26" rx="86" ry="34" fill="#cfc6c2"/><ellipse cx="124" cy="26" rx="86" ry="34" fill="none" stroke="#e8d8b0" stroke-width="4"/><ellipse cx="132" cy="38" rx="58" ry="22" fill="#e4dccf"/><ellipse cx="132" cy="38" rx="58" ry="22" fill="none" stroke="#d8b070" stroke-width="3"/><polygon points="-12,40 24,44 24,100 -12,104" fill="#b8a690"/><rect x="24" y="50" width="68" height="60" fill="#8a5c3a"/><rect x="28" y="56" width="16" height="28" fill="#4e8068"/><rect x="28" y="86" width="16" height="22" fill="#9ab0a4"/><rect x="48" y="58" width="14" height="26" fill="#6a9484"/><rect x="48" y="86" width="14" height="22" fill="#b0c0b8"/><rect x="66" y="60" width="12" height="24" fill="#8aa89c"/><rect x="66" y="86" width="12" height="20" fill="#b8c4bc"/><rect x="80" y="62" width="9" height="44" fill="#a0b0a8"/><rect x="94" y="58" width="14" height="50" fill="#c4b49c"/><ellipse cx="124" cy="54" rx="19" ry="13" fill="#fbf4e0"/><ellipse cx="124" cy="50" rx="10" ry="8" fill="#ffffff"/><rect x="120" y="68" width="64" height="16" fill="#8c7e7c"/><rect x="128" y="72" width="10" height="12" fill="#d8c0a0"/><rect x="118" y="86" width="66" height="14" fill="#eadcc4"/><ellipse cx="122" cy="122" rx="56" ry="15" fill="#b8a486"/><ellipse cx="122" cy="122" rx="46" ry="11" fill="#d2c0a2"/><ellipse cx="122" cy="122" rx="30" ry="7" fill="#b09a7c"/><polygon points="150,134 166,134 124,184 104,184" fill="#a8906e"/><polygon points="-12,86 22,92 26,122 -12,126" fill="#b49e74"/><ellipse cx="10" cy="100" rx="8" ry="12" fill="#8e8264"/><polygon points="0,122 74,118 78,134 2,138" fill="#e6dfd2"/><polygon points="6,136 76,132 72,152 10,158" fill="#a49a86"/><polygon points="10,156 16,156 14,172 8,172" fill="#b0a48c"/><polygon points="66,150 72,150 74,164 68,164" fill="#b0a48c"/><polygon points="-12,150 12,160 10,184 -12,184" fill="#a89878"/><rect x="115" y="82" width="6" height="22" fill="#2a3040"/><rect x="120" y="94" width="7" height="10" fill="#4a4e58"/><ellipse cx="38" cy="120" rx="4" ry="3" fill="#6aa040"/></g></svg>
<div class="t" style="left:796.7px;top:1156.3px;font-size:14.42px;color:#1f1f1f;">一楼大厅.jpg</div>
<div class="t" style="left:796.7px;top:1181.8px;font-size:12.36px;color:#a8a8a8;"><span class="n">2025</span>年08月29日<span class="n">15:49:37</span></div>
<svg class="b" style="left:993.4px;top:970.6px;border-radius:6px;" width="172.4" height="172.4" viewBox="0 0 172 172" preserveAspectRatio="none"><defs><linearGradient id="h2a" x1="0" y1="0" x2="0" y2="1"><stop offset="0" stop-color="#c8920f"/><stop offset="0.3" stop-color="#b8820c"/><stop offset="0.55" stop-color="#a87408"/><stop offset="0.6" stop-color="#e8c870"/><stop offset="0.8" stop-color="#e4bc58"/><stop offset="1" stop-color="#d8a838"/></linearGradient></defs><g filter="url(#bl)"><rect x="-12" y="-12" width="196" height="196" fill="url(#h2a)"/><polygon points="-12,-12 40,-12 4,50 -12,60" fill="#b07a0a"/><polygon points="24,-12 44,-12 16,70 4,72" fill="#f0c840"/><polygon points="50,-12 70,-12 40,78 28,78" fill="#8a5a06"/><polygon points="70,-12 92,-12 62,80 46,80" fill="#d8a420"/><polygon points="88,-12 100,-12 70,80 64,80" fill="#f6d858"/><polygon points="100,-12 140,-12 96,70 76,78" fill="#a87408"/><polygon points="128,-12 150,-12 110,64 96,70" fill="#e8b830"/><polygon points="150,-12 184,-12 184,30 120,74 104,70" fill="#c89414"/><polygon points="184,26 184,60 126,90 112,78" fill="#e4b428"/><polygon points="-12,60 30,50 60,84 -12,96" fill="#a06c08"/><polygon points="0,74 60,86 64,96 0,96" fill="#d8a828"/><polygon points="96,72 184,56 184,96 98,96" fill="#c08c10"/><polygon points="130,70 184,50 184,62 136,80" fill="#f0cc50"/><ellipse cx="8" cy="62" rx="9" ry="16" fill="#6a6ab0" fill-opacity="0.75"/><ellipse cx="126" cy="72" rx="13" ry="9" fill="#6468b4" fill-opacity="0.8"/><ellipse cx="144" cy="92" rx="10" ry="5" fill="#7a7cc0" fill-opacity="0.6"/><rect x="-12" y="96" width="84" height="10" fill="#f2dc98"/><rect x="98" y="96" width="90" height="10" fill="#eed48a"/><rect x="-12" y="92" width="20" height="56" fill="#c89a34"/><rect x="6" y="94" width="3" height="52" fill="#f8ecc0"/><rect x="12" y="106" width="58" height="34" fill="#b47608"/><ellipse cx="32" cy="124" rx="20" ry="11" fill="#f4b414"/><ellipse cx="26" cy="120" rx="10" ry="6" fill="#ffd040"/><rect x="58" y="106" width="6" height="34" fill="#8a3c10"/><rect x="70" y="76" width="26" height="70" fill="#9a4c12"/><rect x="78" y="76" width="6" height="70" fill="#c07424"/><rect x="92" y="76" width="3" height="70" fill="#f0d080"/><rect x="98" y="106" width="90" height="34" fill="#7c4418"/><rect x="132" y="104" width="6" height="30" fill="#a04a18"/><rect x="104" y="112" width="60" height="10" fill="#5a3a20"/><rect x="108" y="124" width="40" height="14" fill="#4a4436"/><ellipse cx="142" cy="140" rx="12" ry="5" fill="#d8a030"/><polygon points="-12,140 184,136 184,184 -12,184" fill="#e8c466"/><polygon points="-12,146 60,138 100,150 -12,168" fill="#f0d078"/><polygon points="100,152 184,146 184,160 110,164" fill="#f4dc98"/><path d="M40 150 Q56 136 76 138 M40 150 Q60 168 120 172" stroke="#5a4424" stroke-width="2.2" fill="none"/><rect x="71" y="128" width="14" height="8" fill="#8ab0e8"/></g></svg>
<div class="t" style="left:993.4px;top:1156.3px;font-size:14.42px;color:#1f1f1f;">三楼会议室.jpg</div>
<div class="t" style="left:993.4px;top:1181.8px;font-size:12.36px;color:#a8a8a8;"><span class="n">2025</span>年08月29日<span class="n">15:49:37</span></div>
<svg class="b" style="left:1190.1px;top:970.6px;border-radius:6px;" width="172.4" height="172.4" viewBox="0 0 172 172" preserveAspectRatio="none"><g filter="url(#bl)"><rect x="-12" y="-12" width="196" height="196" fill="#2a2a24"/><rect x="-12" y="-12" width="118" height="38" fill="#2e2018"/><ellipse cx="82" cy="16" rx="9" ry="5" fill="#b07838"/><rect x="12" y="24" width="94" height="32" fill="#25272a"/><polygon points="-12,20 18,40 18,150 -12,150" fill="#34383c"/><rect x="-2" y="40" width="7" height="100" fill="#8a9498" fill-opacity="0.8"/><rect x="9" y="46" width="5" height="94" fill="#6a747a" fill-opacity="0.7"/><polygon points="16,38 32,50 32,138 16,146" fill="#7c4c2a"/><rect x="32" y="56" width="74" height="80" fill="#5e3c24"/><rect x="46" y="60" width="58" height="10" fill="#704828"/><rect x="34" y="66" width="12" height="56" fill="#5c686e"/><rect x="104" y="-12" width="80" height="164" fill="#1c4638"/><rect x="104" y="-12" width="80" height="50" fill="#183a30"/><rect x="112" y="70" width="60" height="36" fill="#27644c"/><rect x="140" y="44" width="34" height="30" fill="#1f5040"/><rect x="104" y="108" width="66" height="26" fill="#0e1612"/><rect x="104" y="132" width="64" height="14" fill="#1f5c46"/><ellipse cx="152" cy="17" rx="6" ry="7" fill="#b48452"/><ellipse cx="144" cy="31" rx="6" ry="7" fill="#b08050"/><ellipse cx="120" cy="42" rx="4.5" ry="5" fill="#a87848"/><ellipse cx="36" cy="108" rx="11" ry="8" fill="#3a5c30"/><ellipse cx="66" cy="104" rx="13" ry="12" fill="#2e4c2a"/><rect x="34" y="114" width="4" height="22" fill="#4a4a40"/><polygon points="44,122 60,118 62,136 46,136" fill="#2c3034"/><polygon points="84,120 100,116 100,136 82,136" fill="#2c3034"/><rect x="66" y="124" width="12" height="12" fill="#8a5a30"/><polygon points="-12,136 184,134 184,184 -12,184" fill="#263c34"/><polygon points="50,140 120,138 140,184 30,184" fill="#34504a"/><polygon points="128,148 184,146 184,184 150,184" fill="#a6a6a0"/><polygon points="-12,146 42,146 40,160 -12,160" fill="#3c3e42"/><polygon points="-12,160 40,160 38,172 -12,172" fill="#8a6434"/><polygon points="126,128 129,112 133,122 136,114 138,130" fill="#f08a24"/></g><circle cx="86" cy="86" r="18.5" fill="#fff" fill-opacity=".93"/><path d="M81 77.5 L95 86 L81 94.5 Z" fill="#5a3c2c"/></svg>
<div class="t" style="left:1190.1px;top:1156.3px;font-size:14.42px;color:#1f1f1f;">咖啡厅.MP4</div>
<div class="t" style="left:1190.1px;top:1181.8px;font-size:12.36px;color:#a8a8a8;"><span class="n">2025</span>年08月29日<span class="n">15:49:37</span></div>
<svg class="b" style="left:1386.8px;top:970.6px;border-radius:6px;" width="172.4" height="172.4" viewBox="0 0 172 172" preserveAspectRatio="none"><defs><linearGradient id="h4a" x1="0" y1="0" x2="0" y2="1"><stop offset="0" stop-color="#4860c8"/><stop offset="0.2" stop-color="#6a80dc"/><stop offset="0.27" stop-color="#8a9ce0"/><stop offset="0.3" stop-color="#7486c0"/></linearGradient></defs><g filter="url(#bl)"><rect x="-12" y="-12" width="196" height="196" fill="url(#h4a)"/><rect x="-12" y="46" width="196" height="10" fill="#5a6ea8"/><polygon points="88,44 120,40 184,44 184,56 88,56" fill="#44528a"/><rect x="0" y="40" width="12" height="16" fill="#7484c0"/><rect x="14" y="38" width="14" height="18" fill="#8a90c8"/><rect x="36" y="26" width="10" height="30" fill="#aab2e6"/><rect x="50" y="40" width="12" height="16" fill="#c8a8c8"/><rect x="64" y="38" width="10" height="18" fill="#e0b8b8"/><rect x="76" y="40" width="10" height="16" fill="#d8a8c0"/><rect x="-12" y="54" width="196" height="30" fill="#20404a"/><rect x="-12" y="54" width="196" height="8" fill="#2e5262"/><rect x="96" y="56" width="70" height="5" fill="#a8c05a" fill-opacity="0.8"/><rect x="120" y="62" width="50" height="4" fill="#7aa068" fill-opacity="0.7"/><polygon points="-12,88 120,70 184,80 184,92 120,83 -12,104" fill="#98a6c8"/><polygon points="20,88 60,82 60,90 20,97" fill="#e8d490"/><polygon points="90,76 130,72 150,76 150,84 120,82 90,86" fill="#e0cc88"/><polygon points="-12,102 120,83 120,134 -12,160" fill="#54382a"/><polygon points="-12,102 120,83 120,96 -12,118" fill="#7a5c40"/><polygon points="120,83 184,92 184,150 120,134" fill="#664830"/><polygon points="120,83 184,92 184,104 120,94" fill="#8a6a44"/><polygon points="-12,160 120,134 184,150 184,184 -12,184" fill="#3a3e36"/><polygon points="20,158 60,146 80,184 10,184" fill="#6a664e"/><polygon points="130,150 184,150 184,184 140,184" fill="#5a4428"/><ellipse cx="118" cy="106" rx="12" ry="8" fill="#5a7c3a"/><rect x="114" y="112" width="10" height="12" fill="#c8b070"/><ellipse cx="80" cy="118" rx="7" ry="6" fill="#5a9040"/><ellipse cx="128" cy="138" rx="21" ry="12" fill="#dcc07a"/><ellipse cx="128" cy="134" rx="18" ry="8" fill="#ecd694"/><ellipse cx="164" cy="136" rx="10" ry="10" fill="#b89a50"/><polygon points="62,128 102,122 124,162 90,176 60,150" fill="#d6ceb6"/><polygon points="64,128 102,122 108,134 68,140" fill="#e8e2d0"/><ellipse cx="88" cy="134" rx="6" ry="4" fill="#8a2a2a"/><rect x="90" y="122" width="12" height="8" fill="#c8a860"/></g></svg>
<div class="t" style="left:1386.8px;top:1156.3px;font-size:14.42px;color:#1f1f1f;">露天阳台.jpg</div>
<div class="t" style="left:1386.8px;top:1181.8px;font-size:12.36px;color:#a8a8a8;"><span class="n">2025</span>年08月29日<span class="n">15:49:37</span></div>
<svg class="b" style="left:600px;top:1218.4px;border-radius:6px;" width="172.4" height="172.4" viewBox="0 0 172 172" preserveAspectRatio="none"><g filter="url(#bl)"><rect x="-12" y="-12" width="196" height="196" fill="#cfc9b8"/><polygon points="-12,-12 40,-12 30,40 -12,60" fill="#dccaa6"/><polygon points="0,16 30,10 30,40 0,50" fill="#b89c74"/><polygon points="22,-12 158,-12 134,42 60,50" fill="#54544a"/><polygon points="30,-4 152,-4 132,10 46,14" fill="#6a6a5e"/><ellipse cx="102" cy="30" rx="40" ry="26" fill="#d4d4d4" fill-opacity="0.8"/><ellipse cx="106" cy="54" rx="20" ry="16" fill="#c8c8c8" fill-opacity="0.75"/><ellipse cx="92" cy="14" rx="26" ry="9" fill="#ececec" fill-opacity="0.6"/><polygon points="-12,50 74,46 76,104 -12,112" fill="#cfe0da"/><rect x="8" y="50" width="5" height="62" fill="#d8c8a4"/><rect x="30" y="50" width="5" height="62" fill="#d8c8a4"/><rect x="50" y="50" width="5" height="58" fill="#d8c8a4"/><rect x="68" y="48" width="5" height="56" fill="#d8c8a4"/><rect x="16" y="52" width="12" height="54" fill="#e6f0ec"/><rect x="78" y="50" width="42" height="54" fill="#c6beb0"/><rect x="104" y="56" width="16" height="48" fill="#dcd6cc"/><rect x="122" y="30" width="62" height="80" fill="#e6dcc2"/><rect x="140" y="20" width="6" height="90" fill="#f0e8d0"/><rect x="150" y="36" width="34" height="14" fill="#4e3e32"/><rect x="150" y="60" width="34" height="8" fill="#5c4a3a"/><rect x="154" y="78" width="30" height="20" fill="#8a6a50"/><rect x="-12" y="104" width="196" height="80" fill="#5a6068"/><ellipse cx="60" cy="104" rx="12" ry="5" fill="#3a7a3a"/><rect x="90" y="100" width="40" height="10" fill="#c8a070"/></g></svg>
<svg class="b" style="left:796.7px;top:1218.4px;border-radius:6px;" width="172.4" height="172.4" viewBox="0 0 172 172" preserveAspectRatio="none"><g filter="url(#bl)"><rect x="-12" y="-12" width="196" height="196" fill="#e9e5db"/><polygon points="-12,-12 110,-12 60,40 -12,84" fill="#e8a81a"/><polygon points="-12,-12 30,-12 -12,40" fill="#d89410"/><polygon points="22,-12 58,-12 90,10 60,50 20,84 -12,96 -12,84 30,50" fill="#f4e2b0"/><polygon points="56,-12 76,-12 74,28 40,62 20,78 52,40" fill="#f6ecc8"/><polygon points="96,-12 140,-12 70,50 60,48" fill="#f2bc24"/><polygon points="140,-12 184,-12 184,40 110,46 84,46" fill="#e6e6de"/><polygon points="-12,84 34,66 34,104 -12,110" fill="#f0d088"/><rect x="34" y="62" width="48" height="60" fill="#b85c20"/><rect x="44" y="62" width="6" height="60" fill="#d07830"/><rect x="62" y="62" width="5" height="60" fill="#9a4614"/><rect x="80" y="58" width="10" height="50" fill="#8a7458"/><rect x="90" y="54" width="24" height="50" fill="#dedad2"/><rect x="114" y="44" width="14" height="70" fill="#e0e4dc"/><rect x="128" y="46" width="56" height="64" fill="#b6d0d8"/><polygon points="132,70 150,56 172,66 184,62 184,100 132,100" fill="#6c9c84"/><rect x="134" y="78" width="50" height="18" fill="#f0c424"/><rect x="-12" y="96" width="196" height="90" fill="#a87848"/><ellipse cx="112" cy="98" rx="9" ry="8" fill="#3a8a3a"/><ellipse cx="62" cy="100" rx="8" ry="5" fill="#4a8a3a"/></g></svg>
<svg class="b" style="left:993.4px;top:1218.4px;border-radius:6px;" width="172.4" height="172.4" viewBox="0 0 172 172" preserveAspectRatio="none"><g filter="url(#bl)"><rect x="-12" y="-12" width="196" height="196" fill="#262a34"/><polygon points="-12,-12 38,-12 8,42 -12,44" fill="#5a9ce0"/><polygon points="-12,-12 16,-12 -4,30 -12,32" fill="#cfe4f8"/><polygon points="36,-12 40,-12 10,44 6,44" fill="#dfe8ff"/><polygon points="38,-12 120,-12 100,50 30,60 14,46" fill="#22252c"/><rect x="60" y="6" width="50" height="6" fill="#30343e"/><polygon points="118,6 152,0 168,20 154,40 120,40 104,24" fill="#1c2230" stroke="#e4ecff" stroke-width="6"/><polygon points="124,44 150,42 160,52 148,62 124,62 114,54" fill="#2a3a5c" stroke="#d4e0ff" stroke-width="4"/><polygon points="92,60 114,58 120,66 110,72 92,72 86,66" fill="#2a3a5c" stroke="#c8d8ff" stroke-width="3.5"/><polygon points="74,72 90,70 94,76 88,80 74,80 70,76" fill="#2a3a5c" stroke="#c0d0f8" stroke-width="3"/><polygon points="-12,50 20,56 70,84 -12,96" fill="#3a4664"/><polygon points="0,58 40,66 44,72 0,66" fill="#b8ccf0"/><polygon points="60,86 184,56 184,110 60,110" fill="#7c94c4"/><polygon points="90,74 184,50 184,70 96,88" fill="#a8b8d8"/><rect x="-12" y="90" width="100" height="30" fill="#3c5c9c"/><rect x="36" y="88" width="36" height="20" fill="#4c7cc0"/><rect x="100" y="84" width="30" height="14" fill="#c4a4a8"/><polygon points="140,80 172,74 176,110 146,110" fill="#2c54a8"/><ellipse cx="54" cy="74" rx="10" ry="5" fill="#e8d0a0" fill-opacity="0.8"/><rect x="-12" y="100" width="60" height="20" fill="#28304a"/></g></svg>
<svg class="b" style="left:1190.1px;top:1218.4px;border-radius:6px;" width="172.4" height="172.4" viewBox="0 0 172 172" preserveAspectRatio="none"><g filter="url(#bl)"><rect x="-12" y="-12" width="196" height="196" fill="#5e5438"/><polygon points="-12,-12 184,-12 184,10 70,50 -12,56" fill="#6a4c2c"/><polygon points="-12,-12 184,-12 150,4 -12,24" fill="#86643c"/><polygon points="-12,24 120,0 130,6 -12,40" fill="#5a3e22"/><polygon points="-12,40 96,18 70,50 -12,56" fill="#4a3420"/><ellipse cx="8" cy="22" rx="3" ry="3" fill="#fff4d0"/><ellipse cx="14" cy="14" rx="2.5" ry="2.5" fill="#fff4d0"/><ellipse cx="22" cy="8" rx="2" ry="2" fill="#fff4d0"/><rect x="-12" y="56" width="44" height="60" fill="#8c7c5e"/><rect x="4" y="64" width="16" height="40" fill="#70644c"/><rect x="32" y="60" width="10" height="56" fill="#2e281c"/><polygon points="42,56 70,48 70,112 42,112" fill="#4c442c"/><polygon points="64,46 112,30 112,74 64,84" fill="#7e7448"/><polygon points="112,18 184,0 184,60 112,72" fill="#8a7c4c"/><polygon points="140,14 184,4 184,44 140,50" fill="#96885a"/><rect x="72" y="84" width="50" height="28" fill="#5a5236"/><rect x="100" y="58" width="20" height="20" fill="#a89860"/><polygon points="112,76 184,64 184,100 112,104" fill="#6a6040"/><rect x="112" y="96" width="72" height="5" fill="#d8c070"/><rect x="64" y="90" width="40" height="4" fill="#c8b068"/><rect x="124" y="40" width="3" height="20" fill="#f4e8b0"/><rect x="86" y="52" width="3" height="14" fill="#f4e8b0"/><rect x="-12" y="106" width="196" height="80" fill="#8a8678"/><ellipse cx="128" cy="102" rx="5" ry="4" fill="#6ab040"/><ellipse cx="34" cy="100" rx="4" ry="3" fill="#6ab040"/></g></svg>
<svg class="b" style="left:1386.8px;top:1218.4px;border-radius:6px;" width="172.4" height="172.4" viewBox="0 0 172 172" preserveAspectRatio="none"><g filter="url(#bl)"><rect x="-12" y="-12" width="196" height="196" fill="#dcc88c"/><polygon points="34,-12 138,-12 112,64 60,64" fill="#dcdcd0"/><polygon points="52,-12 120,-12 104,50 68,50" fill="#e8e8e0"/><rect x="78" y="-12" width="18" height="60" fill="#f2b41c"/><rect x="82" y="40" width="10" height="24" fill="#f8d040"/><polygon points="-12,-12 34,-12 60,64 60,120 -12,120" fill="#cdb87c"/><polygon points="184,-12 138,-12 112,64 112,120 184,120" fill="#cdb87c"/><polygon points="10,-12 30,-12 34,120 12,120" fill="#eeb41e"/><polygon points="162,-12 142,-12 138,120 160,120" fill="#eeb41e"/><polygon points="40,10 50,30 52,120 42,120" fill="#f2c028"/><polygon points="132,10 122,30 120,120 130,120" fill="#f2c028"/><polygon points="30,-12 36,-12 62,60 58,64" fill="#f4e4a0"/><polygon points="142,-12 136,-12 110,60 114,64" fill="#f4e4a0"/><polygon points="-12,-12 10,-12 12,120 -12,120" fill="#b8a274"/><polygon points="184,-12 162,-12 160,120 184,120" fill="#b8a274"/><rect x="60" y="64" width="52" height="50" fill="#c4b090"/><rect x="72" y="76" width="28" height="40" fill="#b0641a"/><rect x="78" y="84" width="16" height="26" fill="#d89028"/><rect x="20" y="84" width="12" height="36" fill="#7a4a18"/><rect x="140" y="84" width="12" height="36" fill="#7a4a18"/><rect x="62" y="84" width="8" height="30" fill="#40302a"/><rect x="102" y="84" width="8" height="30" fill="#40302a"/></g></svg>
<div class="b" style="left:807px;top:981px;width:16px;height:16px;background:#fff;border-radius:3px;"></div>
<div class="b" style="left:943px;top:981px;width:16px;height:16px;background:#fff;border-radius:3px;"></div>
<svg class="b" style="left:943px;top:981px;" width="16" height="16" viewBox="0 0 16 16"><circle cx="4" cy="8" r="1.2" fill="#333"/><circle cx="8" cy="8" r="1.2" fill="#333"/><circle cx="12" cy="8" r="1.2" fill="#333"/></svg>
<div class="b" style="left:1659.5px;top:427px;width:1490.5px;height:1000px;background:#f3f3f3;border:16px solid #f3f4f9;border-radius:30px;box-sizing:border-box;"></div>
<div class="b" style="left:1781px;top:442.5px;width:427px;height:900px;background:#fff;box-shadow:-2px 0 6px rgba(0,0,0,.05);"></div>
<div class="t" style="left:1795.5px;top:454.1px;font-size:12.36px;color:#0052d9;">详情</div>
<div class="b" style="left:1795.5px;top:481.5px;width:25.5px;height:3px;background:#0052d9;"></div>
<div class="t" style="left:1842px;top:454.1px;font-size:12.36px;color:#505050;">聊天室</div>
<div class="t" style="left:1900.5px;top:454.1px;font-size:12.36px;color:#505050;">相关投诉</div>
<div class="b" style="left:1781px;top:484px;width:428px;height:2px;background:#f3f3f3;"></div>
<svg class="b" style="left:2182.5px;top:458.4px;" width="10" height="10" viewBox="0 0 10 10"><path d="M1.5 1.5 L8.5 8.5 M8.5 1.5 L1.5 8.5" stroke="#222" stroke-width="1.7"/></svg>
<div class="b" style="left:1795px;top:500.5px;width:385.5px;height:47px;background:#dbe2fc;border-radius:5px;"></div>
<div class="b" style="left:1817.5px;top:516.5px;width:15px;height:15px;background:#0052d9;border-radius:50%;"></div>
<svg class="b" style="left:1817.5px;top:516.5px;" width="15" height="15" viewBox="0 0 15 15"><circle cx="7.5" cy="4.3" r="1.1" fill="#fff"/><rect x="6.6" y="6.3" width="1.8" height="5" fill="#fff"/></svg>
<div class="t" style="left:1842px;top:514.5px;font-size:12.36px;color:#1f1f1f;">该商家累计投诉10次</div>
<div class="b" style="left:1798px;top:582px;width:1px;height:600px;border-left:1px dotted #d6d6d6;"></div>
<div class="b" style="left:1795px;top:573.5px;width:7px;height:7px;background:#0052d9;border-radius:50%;box-shadow:0 0 0 3px #fff;"></div><div class="t" style="left:1813px;top:567.5px;font-size:14.42px;color:#1f1f1f;font-weight:600;">提交投诉</div>
<div class="t" style="left:1874px;top:595.5px;font-size:12.36px;color:#adadad;transform:translateX(-100%);">投诉编号：</div><div class="t" style="left:1875.5px;top:595.5px;font-size:12.36px;color:#1f1f1f;"><span class="n">DD123456789098</span></div>
<div class="t" style="left:1874px;top:620.3px;font-size:12.36px;color:#adadad;transform:translateX(-100%);">投诉内容：</div><div class="t" style="left:1875.5px;top:620.3px;font-size:12.36px;color:#1f1f1f;">商家服务态度差，订单不能使用</div>
<div class="t" style="left:1874px;top:647.1px;font-size:12.36px;color:#adadad;transform:translateX(-100%);">投诉对象：</div><div class="t" style="left:1875.5px;top:647.1px;font-size:12.36px;color:#1f1f1f;">大米先生</div>
<div class="t" style="left:1874px;top:674.3px;font-size:12.36px;color:#adadad;transform:translateX(-100%);">用户诉求：</div><div class="t" style="left:1875.5px;top:674.3px;font-size:12.36px;color:#1f1f1f;">退款并三倍赔偿</div>
<div class="t" style="left:1874px;top:700.5px;font-size:12.36px;color:#adadad;transform:translateX(-100%);">投诉类型：</div><div class="t" style="left:1875.5px;top:700.5px;font-size:12.36px;color:#1f1f1f;">订单</div>
<div class="t" style="left:1874px;top:724.3px;font-size:12.36px;color:#adadad;transform:translateX(-100%);">投诉人：</div><div class="t" style="left:1875.5px;top:724.3px;font-size:12.36px;color:#1f1f1f;">张三</div>
<div class="t" style="left:1874px;top:746.3px;font-size:12.36px;color:#adadad;transform:translateX(-100%);">投诉时间：</div><div class="t" style="left:1875.5px;top:746.3px;font-size:12.36px;color:#1f1f1f;"><span class="n">2025<span class="h">-</span>09<span class="h">-</span>02 15:19:27</span></div>
<div class="b" style="left:1795px;top:792.5px;width:7px;height:7px;background:#0052d9;border-radius:50%;box-shadow:0 0 0 3px #fff;"></div><div class="t" style="left:1813px;top:786.5px;font-size:14.42px;color:#1f1f1f;font-weight:600;">资源服务商处理</div>
<div class="t" style="left:1874px;top:814.3px;font-size:12.36px;color:#adadad;transform:translateX(-100%);">处理人：</div><div class="t" style="left:1875.5px;top:814.3px;font-size:12.36px;color:#1f1f1f;">李四</div>
<div class="t" style="left:1874px;top:836.5px;font-size:12.36px;color:#adadad;transform:translateX(-100%);">处理结果：</div><div class="t" style="left:1875.5px;top:836.5px;font-size:12.36px;color:#d54941;">退单</div>
<div class="t" style="left:1874px;top:859.5px;font-size:12.36px;color:#adadad;transform:translateX(-100%);">退单原因：</div><div class="t" style="left:1875.5px;top:859.5px;font-size:12.36px;color:#1f1f1f;">商家未能提供对应服务</div>
<div class="t" style="left:1874px;top:882.5px;font-size:12.36px;color:#adadad;transform:translateX(-100%);">处理时间：</div><div class="t" style="left:1875.5px;top:882.5px;font-size:12.36px;color:#1f1f1f;"><span class="n">2025<span class="h">-</span>09<span class="h">-</span>02 15:19:27</span></div>
<div class="b" style="left:1795px;top:927.5px;width:7px;height:7px;background:#0052d9;border-radius:50%;box-shadow:0 0 0 3px #fff;"></div><div class="t" style="left:1813px;top:921.5px;font-size:14.42px;color:#1f1f1f;font-weight:600;">用户申诉</div>
<div class="t" style="left:1874px;top:952.9px;font-size:12.36px;color:#adadad;transform:translateX(-100%);">申诉诉求：</div><div class="t" style="left:1875.5px;top:952.9px;font-size:12.36px;color:#1f1f1f;">退款并三倍赔偿</div>
<div class="t" style="left:1874px;top:976.5px;font-size:12.36px;color:#adadad;transform:translateX(-100%);">申诉时间：</div><div class="t" style="left:1875.5px;top:976.5px;font-size:12.36px;color:#1f1f1f;"><span class="n">2025<span class="h">-</span>09<span class="h">-</span>02 15:19:27</span></div>
<div class="b" style="left:1795px;top:1022.3px;width:7px;height:7px;background:#0052d9;border-radius:50%;box-shadow:0 0 0 3px #fff;"></div><div class="t" style="left:1813px;top:1016.3px;font-size:14.42px;color:#1f1f1f;font-weight:600;">平台介入处理</div>
<div class="t" style="left:1874px;top:1045.1px;font-size:12.36px;color:#adadad;transform:translateX(-100%);">处理人：</div><div class="t" style="left:1875.5px;top:1045.1px;font-size:12.36px;color:#1f1f1f;">王五</div>
<div class="t" style="left:1874px;top:1066.7px;font-size:12.36px;color:#adadad;transform:translateX(-100%);">处理结果：</div><div class="t" style="left:1875.5px;top:1066.7px;font-size:12.36px;color:#d54941;">优惠券补偿</div>
<div class="t" style="left:1874px;top:1089.9px;font-size:12.36px;color:#adadad;transform:translateX(-100%);">备注：</div><div class="t" style="left:1875.5px;top:1089.9px;font-size:12.36px;color:#1f1f1f;">用户情况不满足三倍赔偿，平台给与10元无门槛优惠券</div>
<div class="t" style="left:1875.5px;top:1107.3px;font-size:12.36px;color:#1f1f1f;">补充，驳回其他诉求</div>
<div class="t" style="left:1874px;top:1131.5px;font-size:12.36px;color:#adadad;transform:translateX(-100%);">处理时间：</div><div class="t" style="left:1875.5px;top:1131.5px;font-size:12.36px;color:#1f1f1f;"><span class="n">2025<span class="h">-</span>09<span class="h">-</span>02 15:19:27</span></div>
<div class="b" style="left:1795px;top:1176.5px;width:7px;height:7px;background:#0052d9;border-radius:50%;box-shadow:0 0 0 3px #fff;"></div><div class="t" style="left:1813px;top:1170.5px;font-size:14.42px;color:#1f1f1f;font-weight:600;">完成</div>
<div class="b" style="left:2247.5px;top:442.5px;width:428.5px;height:900px;background:#fff;"></div>
<div class="t" style="left:2262px;top:454.1px;font-size:12.36px;color:#505050;">详情</div>
<div class="t" style="left:2308.5px;top:454.1px;font-size:12.36px;color:#0052d9;">聊天室</div>
<div class="b" style="left:2308.5px;top:481.5px;width:37.5px;height:3px;background:#0052d9;"></div>
<div class="b" style="left:2247.5px;top:484px;width:428px;height:2px;background:#f3f3f3;"></div>
<svg class="b" style="left:2649px;top:458.4px;" width="10" height="10" viewBox="0 0 10 10"><path d="M1.5 1.5 L8.5 8.5 M8.5 1.5 L1.5 8.5" stroke="#222" stroke-width="1.7"/></svg>
<svg class="b" style="left:2272.5px;top:516.5px;border-radius:50%;" width="43" height="43" viewBox="0 0 44 44"><g filter="url(#bs)"><rect x="-6" y="-6" width="56" height="56" fill="#466a30"/><rect x="-6" y="-6" width="56" height="22" fill="#2e8ed4"/><polygon points="24,2 44,12 44,18 14,16" fill="#e8eef2"/><polygon points="-6,8 8,12 -6,16" fill="#dfe8ee"/><rect x="-6" y="15" width="56" height="7" fill="#2e4a34"/><rect x="-6" y="21" width="56" height="12" fill="#3e5a30"/><rect x="-6" y="32" width="56" height="18" fill="#54742e"/></g><rect x="0" y="17" width="44" height="27" fill="#000" fill-opacity=".2"/></svg>
<div class="t" style="left:2294px;top:534px;font-size:11.12px;color:rgba(255,255,255,.9);transform:translateX(-50%);font-weight:400;">大熊世</div>
<svg class="b" style="left:2325.95px;top:516.5px;border-radius:50%;" width="43" height="43" viewBox="0 0 44 44"><g filter="url(#bs)"><rect x="-6" y="-6" width="56" height="56" fill="#2e4a40"/><ellipse cx="22" cy="12" rx="14" ry="8" fill="#f0b474"/><ellipse cx="22" cy="10" rx="7" ry="5" fill="#ffe0a8"/><rect x="-6" y="18" width="56" height="8" fill="#7a5c48"/><rect x="-6" y="25" width="56" height="10" fill="#4a4e48"/><polygon points="-6,-6 12,-6 6,10 -6,16" fill="#27443a"/><polygon points="50,-6 32,-6 38,10 50,16" fill="#27443a"/><rect x="-6" y="34" width="56" height="16" fill="#2a4036"/></g><rect x="0" y="17" width="44" height="27" fill="#000" fill-opacity=".2"/></svg>
<div class="t" style="left:2347.45px;top:534px;font-size:11.12px;color:rgba(255,255,255,.9);transform:translateX(-50%);font-weight:400;">米干</div>
<svg class="b" style="left:2379.4px;top:516.5px;border-radius:50%;" width="43" height="43" viewBox="0 0 44 44"><g filter="url(#bs)"><rect x="-6" y="-6" width="56" height="56" fill="#3a74ba"/><rect x="-6" y="26" width="56" height="24" fill="#7a8a96"/><ellipse cx="22" cy="14" rx="13" ry="12" fill="#f2ac0c"/><ellipse cx="22" cy="12" rx="15" ry="8" fill="#f6b810"/><ellipse cx="22" cy="15" rx="6.5" ry="6.5" fill="#6a3a10"/><rect x="20.5" y="24" width="3.5" height="26" fill="#6a8a34"/><ellipse cx="12" cy="34" rx="7" ry="3" fill="#86a040"/><rect x="-6" y="36" width="56" height="14" fill="#5a6a74" fill-opacity="0.6"/></g><rect x="0" y="17" width="44" height="27" fill="#000" fill-opacity=".2"/></svg>
<div class="t" style="left:2400.9px;top:534px;font-size:11.12px;color:rgba(255,255,255,.9);transform:translateX(-50%);font-weight:400;">张仲然</div>
<svg class="b" style="left:2432.85px;top:516.5px;border-radius:50%;" width="43" height="43" viewBox="0 0 44 44"><g filter="url(#bs)"><rect x="-6" y="-6" width="56" height="56" fill="#6a8a6a"/><rect x="-6" y="-6" width="56" height="16" fill="#a4cce8"/><ellipse cx="10" cy="6" rx="8" ry="4" fill="#e0e870" fill-opacity="0.7"/><ellipse cx="22" cy="22" rx="14" ry="13" fill="#e4e4e4"/><ellipse cx="11" cy="10" rx="5" ry="4" fill="#222"/><ellipse cx="33" cy="10" rx="5" ry="4" fill="#222"/><ellipse cx="16" cy="20" rx="4" ry="5" fill="#2a2a2a"/><ellipse cx="28" cy="20" rx="4" ry="5" fill="#2a2a2a"/><ellipse cx="22" cy="36" rx="17" ry="10" fill="#3c3c3c"/><ellipse cx="6" cy="30" rx="4" ry="4" fill="#c86428" fill-opacity="0.8"/></g><rect x="0" y="17" width="44" height="27" fill="#000" fill-opacity=".2"/></svg>
<div class="t" style="left:2454.35px;top:534px;font-size:10.71px;color:rgba(255,255,255,.9);transform:translateX(-50%);font-weight:400;"><span class="n">laizna</span></div>
<svg class="b" style="left:2486.3px;top:516.5px;border-radius:50%;" width="43" height="43" viewBox="0 0 44 44"><g filter="url(#bs)"><rect x="-6" y="-6" width="56" height="56" fill="#566878"/><rect x="-6" y="24" width="56" height="10" fill="#48586a"/><ellipse cx="24" cy="16" rx="10" ry="10" fill="#8e6444"/><ellipse cx="16" cy="8" rx="4" ry="4" fill="#7a5234"/><ellipse cx="32" cy="8" rx="4" ry="4" fill="#7a5234"/><ellipse cx="26" cy="19" rx="5" ry="4" fill="#c8a880"/><ellipse cx="22" cy="38" rx="13" ry="10" fill="#a87c50"/><polygon points="14,30 30,30 34,50 10,50" fill="#9a7a54"/><rect x="-6" y="36" width="12" height="14" fill="#3e4c5a"/></g><rect x="0" y="17" width="44" height="27" fill="#000" fill-opacity=".2"/></svg>
<div class="t" style="left:2507.8px;top:534px;font-size:10.71px;color:rgba(255,255,255,.9);transform:translateX(-50%);font-weight:400;"><span class="n">zhagna</span></div>
<svg class="b" style="left:2539.75px;top:516.5px;border-radius:50%;" width="43" height="43" viewBox="0 0 44 44"><g filter="url(#bs)"><rect x="-6" y="-6" width="56" height="56" fill="#d23a18"/><ellipse cx="22" cy="30" rx="13" ry="12" fill="#a8a092"/><ellipse cx="22" cy="26" rx="11" ry="8" fill="#bcb4a6"/><rect x="18" y="4" width="3" height="10" fill="#f0e8e0"/><rect x="24" y="4" width="3" height="10" fill="#f0e8e0"/><rect x="-6" y="22" width="56" height="2" fill="#a82a10"/><ellipse cx="22" cy="42" rx="14" ry="5" fill="#3a3430"/></g><rect x="0" y="17" width="44" height="27" fill="#000" fill-opacity=".2"/></svg>
<div class="t" style="left:2561.25px;top:534px;font-size:11.12px;color:rgba(255,255,255,.9);transform:translateX(-50%);font-weight:400;">阮陈恩</div>
<svg class="b" style="left:2593.2px;top:516.5px;border-radius:50%;" width="43" height="43" viewBox="0 0 44 44"><g filter="url(#bs)"><rect x="-6" y="-6" width="56" height="56" fill="#3a62a6"/><rect x="-6" y="22" width="56" height="28" fill="#7c7656"/><polygon points="6,14 22,10 26,30 4,34" fill="#b8a058"/><ellipse cx="31" cy="12" rx="6" ry="7" fill="#2a221e"/><polygon points="24,18 40,16 44,50 22,50" fill="#8a8468"/><ellipse cx="30" cy="14" rx="3" ry="4" fill="#c8a080"/></g><rect x="0" y="17" width="44" height="27" fill="#000" fill-opacity=".2"/></svg>
<div class="t" style="left:2614.7px;top:534px;font-size:11.12px;color:rgba(255,255,255,.9);transform:translateX(-50%);font-weight:400;">用户名</div>
<div class="b" style="left:2263px;top:572px;width:399px;height:2px;background:#f3f3f3;"></div>
<svg class="b" style="left:2271.5px;top:587.5px;border-radius:50%;" width="33" height="33" viewBox="0 0 44 44"><g filter="url(#bs)"><rect x="-6" y="-6" width="56" height="56" fill="#6e5240"/><rect x="-6" y="-6" width="30" height="22" fill="#a88a68"/><rect x="26" y="-6" width="24" height="18" fill="#c8b8a0"/><ellipse cx="8" cy="14" rx="8" ry="6" fill="#c8a070" fill-opacity="0.8"/><ellipse cx="19" cy="30" rx="10" ry="13" fill="#1e1a1e"/><ellipse cx="20" cy="15" rx="5.5" ry="6.5" fill="#caa288"/><ellipse cx="19" cy="10" rx="6.5" ry="4.5" fill="#1c1614"/><ellipse cx="35" cy="28" rx="7" ry="11" fill="#ece4dc"/><ellipse cx="34" cy="13" rx="5" ry="6" fill="#d8b49a"/><ellipse cx="34" cy="8" rx="5.5" ry="3.5" fill="#2a201c"/><rect x="-6" y="36" width="56" height="14" fill="#3a2a26"/><ellipse cx="8" cy="30" rx="6" ry="5" fill="#5a3a30"/></g></svg>
<div class="t" style="left:2310.5px;top:586.9px;font-size:8.76px;color:#8a8a8a;">张仲然</div>
<div class="b" style="left:2340.5px;top:588.5px;width:33.5px;height:13.5px;background:#0a7cff;border-radius:3px;"></div>
<div class="t" style="left:2362px;top:586px;font-size:8.24px;color:#fff;transform:translateX(-50%);">司机</div>
<svg class="b" style="left:2343.5px;top:590.5px;" width="9" height="9" viewBox="0 0 9 9"><circle cx="4.5" cy="2.8" r="2" fill="#fff"/><path d="M1 8.5 Q1 5.2 4.5 5.2 Q8 5.2 8 8.5 Z" fill="#fff"/></svg>
<div class="b" style="left:2310.5px;top:607.5px;width:151px;height:29.5px;background:#f4f4f9;border-radius:6px;"></div>
<div class="t" style="left:2318.5px;top:612.05px;font-size:12.77px;color:#1f1f1f;">欢迎大家，马上开启行程</div>
<svg class="b" style="left:2271.5px;top:649.5px;border-radius:50%;" width="33" height="33" viewBox="0 0 44 44"><g filter="url(#bs)"><rect x="-6" y="-6" width="56" height="56" fill="#7a9080"/><rect x="-6" y="-6" width="56" height="16" fill="#a4c0aa"/><rect x="28" y="4" width="22" height="22" fill="#b4c8b8"/><rect x="-6" y="8" width="10" height="24" fill="#5a7060"/><ellipse cx="19" cy="17" rx="6.5" ry="8" fill="#c8a48c"/><ellipse cx="18" cy="10" rx="7.5" ry="4.5" fill="#241e1c"/><polygon points="2,34 30,27 38,50 -2,50" fill="#3c3a5a"/><ellipse cx="34" cy="36" rx="9" ry="8" fill="#56625c"/><ellipse cx="36" cy="34" rx="5" ry="5" fill="#c8d0c8" fill-opacity="0.7"/><rect x="-6" y="42" width="56" height="8" fill="#2e3436"/></g></svg>
<div class="t" style="left:2310.5px;top:648.9px;font-size:8.76px;color:#8a8a8a;">米干</div>
<div class="b" style="left:2332px;top:650.5px;width:33.5px;height:13.5px;background:#2bc07a;border-radius:3px;"></div>
<div class="t" style="left:2353.5px;top:648px;font-size:8.24px;color:#fff;transform:translateX(-50%);">导游</div>
<svg class="b" style="left:2335px;top:652.5px;" width="9" height="9" viewBox="0 0 9 9"><path d="M1.5 1 V8.5 M1.5 1.5 H7.5 L6 3.5 L7.5 5.5 H1.5" fill="#fff" stroke="#fff" stroke-width="1"/></svg>
<div class="b" style="left:2310.5px;top:670px;width:76.5px;height:30px;background:#f4f4f9;border-radius:6px;"></div>
<div class="t" style="left:2318.5px;top:674.8px;font-size:12.77px;color:#1f1f1f;">祝旅途愉快</div>
<div class="b" style="left:2306px;top:728px;width:100px;height:2px;background:#f8f8f8;"></div>
<div class="b" style="left:2514px;top:728px;width:100px;height:2px;background:#f8f8f8;"></div>
<div class="t" style="left:2460px;top:719.3px;font-size:10.3px;color:#c4c4c4;transform:translateX(-50%);">以下是最新消息</div>
<div class="b" style="left:2530.5px;top:759px;width:75.5px;height:29.5px;background:#1fc46c;border-radius:6px;"></div>
<div class="t" style="left:2537.5px;top:763.55px;font-size:12.77px;color:#fff;">祝旅途愉快</div>
<svg class="b" style="left:2611.5px;top:757.5px;border-radius:50%;" width="33" height="33" viewBox="0 0 44 44"><g filter="url(#bs)"><rect x="-6" y="-6" width="56" height="56" fill="#2c2a2a"/><rect x="6" y="4" width="6" height="16" fill="#8890a0" fill-opacity="0.6"/><ellipse cx="12" cy="10" rx="3" ry="3" fill="#4a90d0" fill-opacity="0.8"/><ellipse cx="8" cy="30" rx="3" ry="4" fill="#d080b0" fill-opacity="0.7"/><ellipse cx="25" cy="20" rx="14" ry="17" fill="#6a3c22"/><ellipse cx="27" cy="18" rx="7.5" ry="9.5" fill="#f2d4c4"/><ellipse cx="22" cy="8" rx="9" ry="5" fill="#5a3018"/><ellipse cx="10" cy="38" rx="9" ry="8" fill="#f0dcd4"/><ellipse cx="26" cy="36" rx="6" ry="7" fill="#d8c0a0"/><ellipse cx="40" cy="30" rx="6" ry="10" fill="#f064c4"/><ellipse cx="22" cy="42" rx="5" ry="5" fill="#5a3018"/><ellipse cx="24" cy="18" rx="2.5" ry="2" fill="#e0a8a0"/></g></svg>
<svg class="b" style="left:2271.5px;top:811.5px;border-radius:50%;" width="33" height="33" viewBox="0 0 44 44"><g filter="url(#bs)"><rect x="-6" y="-6" width="56" height="56" fill="#6e5240"/><rect x="-6" y="-6" width="30" height="22" fill="#a88a68"/><rect x="26" y="-6" width="24" height="18" fill="#c8b8a0"/><ellipse cx="8" cy="14" rx="8" ry="6" fill="#c8a070" fill-opacity="0.8"/><ellipse cx="19" cy="30" rx="10" ry="13" fill="#1e1a1e"/><ellipse cx="20" cy="15" rx="5.5" ry="6.5" fill="#caa288"/><ellipse cx="19" cy="10" rx="6.5" ry="4.5" fill="#1c1614"/><ellipse cx="35" cy="28" rx="7" ry="11" fill="#ece4dc"/><ellipse cx="34" cy="13" rx="5" ry="6" fill="#d8b49a"/><ellipse cx="34" cy="8" rx="5.5" ry="3.5" fill="#2a201c"/><rect x="-6" y="36" width="56" height="14" fill="#3a2a26"/><ellipse cx="8" cy="30" rx="6" ry="5" fill="#5a3a30"/></g></svg>
<div class="t" style="left:2310.5px;top:810.9px;font-size:8.76px;color:#8a8a8a;">张仲然</div>
<div class="b" style="left:2310.5px;top:830px;width:39px;height:30px;background:#f4f4f9;border-radius:6px;"></div>
<div class="t" style="left:2318.5px;top:834.8px;font-size:12.77px;color:#1f1f1f;">收到</div>
<div class="b" style="left:2310.5px;top:865px;width:118px;height:26px;background:#f4f4f9;border-radius:6px;"></div>
<div class="t" style="left:2320.5px;top:867.8px;font-size:10.61px;color:#8a8a8a;">张三四：祝旅途愉快</div>
<div class="b" style="left:2567px;top:906.5px;width:39.5px;height:29.5px;background:#1fc46c;border-radius:6px;"></div>
<div class="t" style="left:2574.5px;top:911.05px;font-size:12.77px;color:#fff;">很棒</div>
<svg class="b" style="left:2611.5px;top:905px;border-radius:50%;" width="33" height="33" viewBox="0 0 44 44"><g filter="url(#bs)"><rect x="-6" y="-6" width="56" height="56" fill="#2c2a2a"/><rect x="6" y="4" width="6" height="16" fill="#8890a0" fill-opacity="0.6"/><ellipse cx="12" cy="10" rx="3" ry="3" fill="#4a90d0" fill-opacity="0.8"/><ellipse cx="8" cy="30" rx="3" ry="4" fill="#d080b0" fill-opacity="0.7"/><ellipse cx="25" cy="20" rx="14" ry="17" fill="#6a3c22"/><ellipse cx="27" cy="18" rx="7.5" ry="9.5" fill="#f2d4c4"/><ellipse cx="22" cy="8" rx="9" ry="5" fill="#5a3018"/><ellipse cx="10" cy="38" rx="9" ry="8" fill="#f0dcd4"/><ellipse cx="26" cy="36" rx="6" ry="7" fill="#d8c0a0"/><ellipse cx="40" cy="30" rx="6" ry="10" fill="#f064c4"/><ellipse cx="22" cy="42" rx="5" ry="5" fill="#5a3018"/><ellipse cx="24" cy="18" rx="2.5" ry="2" fill="#e0a8a0"/></g></svg>
<div class="b" style="left:2379px;top:940.5px;width:227.5px;height:42.5px;background:#f4f4f9;border-radius:6px;"></div>
<div class="t" style="left:2390px;top:943.3px;font-size:10.61px;color:#8a8a8a;">安之若素：[游记] 成都到都江堰三天两晚行</div>
<div class="t" style="left:2390px;top:958.9px;font-size:10.61px;color:#8a8a8a;">程规划</div>
<svg class="b" style="left:2271.5px;top:997px;border-radius:50%;" width="33" height="33" viewBox="0 0 44 44"><g filter="url(#bs)"><rect x="-6" y="-6" width="56" height="56" fill="#6e5240"/><rect x="-6" y="-6" width="30" height="22" fill="#a88a68"/><rect x="26" y="-6" width="24" height="18" fill="#c8b8a0"/><ellipse cx="8" cy="14" rx="8" ry="6" fill="#c8a070" fill-opacity="0.8"/><ellipse cx="19" cy="30" rx="10" ry="13" fill="#1e1a1e"/><ellipse cx="20" cy="15" rx="5.5" ry="6.5" fill="#caa288"/><ellipse cx="19" cy="10" rx="6.5" ry="4.5" fill="#1c1614"/><ellipse cx="35" cy="28" rx="7" ry="11" fill="#ece4dc"/><ellipse cx="34" cy="13" rx="5" ry="6" fill="#d8b49a"/><ellipse cx="34" cy="8" rx="5.5" ry="3.5" fill="#2a201c"/><rect x="-6" y="36" width="56" height="14" fill="#3a2a26"/><ellipse cx="8" cy="30" rx="6" ry="5" fill="#5a3a30"/></g></svg>
<div class="t" style="left:2310.5px;top:996.4px;font-size:8.76px;color:#8a8a8a;">张仲然</div>
<div class="b" style="left:2310.5px;top:1015.5px;width:39px;height:30px;background:#f4f4f9;border-radius:6px;"></div>
<div class="t" style="left:2318.5px;top:1020.3px;font-size:12.77px;color:#1f1f1f;">收到</div>
<div class="b" style="left:2310.5px;top:1050px;width:92.5px;height:40px;background:#f4f4f9;border-radius:6px;"></div>
<div class="t" style="left:2320.5px;top:1053.5px;font-size:10.61px;color:#8a8a8a;">张三四：</div>
<div class="b" style="left:2363px;top:1055.5px;width:29px;height:29px;background:linear-gradient(120deg,#9a8890 0%,#7a7480 45%,#e89a80 55%,#f0a890 100%);border-radius:3px;"></div>
<svg class="b" style="left:2271.5px;top:1103.5px;border-radius:50%;" width="33" height="33" viewBox="0 0 44 44"><g filter="url(#bs)"><rect x="-6" y="-6" width="56" height="56" fill="#6e5240"/><rect x="-6" y="-6" width="30" height="22" fill="#a88a68"/><rect x="26" y="-6" width="24" height="18" fill="#c8b8a0"/><ellipse cx="8" cy="14" rx="8" ry="6" fill="#c8a070" fill-opacity="0.8"/><ellipse cx="19" cy="30" rx="10" ry="13" fill="#1e1a1e"/><ellipse cx="20" cy="15" rx="5.5" ry="6.5" fill="#caa288"/><ellipse cx="19" cy="10" rx="6.5" ry="4.5" fill="#1c1614"/><ellipse cx="35" cy="28" rx="7" ry="11" fill="#ece4dc"/><ellipse cx="34" cy="13" rx="5" ry="6" fill="#d8b49a"/><ellipse cx="34" cy="8" rx="5.5" ry="3.5" fill="#2a201c"/><rect x="-6" y="36" width="56" height="14" fill="#3a2a26"/><ellipse cx="8" cy="30" rx="6" ry="5" fill="#5a3a30"/></g></svg>
<div class="t" style="left:2310.5px;top:1102.9px;font-size:8.76px;color:#8a8a8a;">张仲然</div>
<div class="b" style="left:2310.5px;top:1121.5px;width:39px;height:30px;background:#f4f4f9;border-radius:6px;"></div>
<div class="t" style="left:2318.5px;top:1126.3px;font-size:12.77px;color:#1f1f1f;">收到</div>
<div class="b" style="left:2310.5px;top:1156.5px;width:92.5px;height:40px;background:#f4f4f9;border-radius:6px;"></div>
<div class="t" style="left:2320.5px;top:1160px;font-size:10.61px;color:#8a8a8a;">张三四：</div>
<div class="b" style="left:2363px;top:1162px;width:29px;height:29px;background:radial-gradient(circle 6px at 50% 50%,#4a5a6a 0%,#4a5a6a 85%,rgba(0,0,0,0) 100%),linear-gradient(110deg,#e8d860 0%,#c8d870 35%,#30b0d8 55%,#38b8e0 100%);border-radius:3px;"></div>
<div class="b" style="left:2272px;top:1215.5px;width:53.5px;height:28px;background:#f4f4f9;border-radius:7px;"></div>
<svg class="b" style="left:2279.5px;top:1222.5px;" width="14" height="14" viewBox="0 0 14 14"><path d="M1.8 2.5 H12.2 L13.6 12.8 H0.4 Z" fill="#f5720e"/><path d="M4.3 3 L7 6.6 L9.7 3" stroke="#fff" stroke-width="1.5" fill="none"/></svg>
<div class="t" style="left:2297.5px;top:1219.5px;font-size:10.71px;color:#2a2a2a;">订单</div>
<div class="b" style="left:2338px;top:1215.5px;width:53.5px;height:28px;background:#f4f4f9;border-radius:7px;"></div>
<svg class="b" style="left:2345.5px;top:1222.5px;" width="14" height="14" viewBox="0 0 14 14"><circle cx="7" cy="4.8" r="3.3" fill="none" stroke="#0a6cff" stroke-width="2.1"/><path d="M1.2 11.8 Q7 6.8 12.8 11.8 Q7 14.6 1.2 11.8 Z" fill="#0a6cff"/></svg>
<div class="t" style="left:2363.5px;top:1219.5px;font-size:10.71px;color:#2a2a2a;">位置</div>
<div class="b" style="left:2403px;top:1215.5px;width:53.5px;height:28px;background:#f4f4f9;border-radius:7px;"></div>
<svg class="b" style="left:2410.5px;top:1222.5px;" width="14" height="14" viewBox="0 0 14 14"><path d="M7 0.3 L10.2 4.8 H3.8 Z M7 3.8 L11.8 9.3 H2.2 Z M7 7.8 L13.4 13.6 H0.6 Z" fill="#1fc46c"/><circle cx="7" cy="10.6" r="1.3" fill="#f4f4f9"/></svg>
<div class="t" style="left:2428.5px;top:1219.5px;font-size:10.71px;color:#2a2a2a;">行程</div>
<div class="b" style="left:2468px;top:1215.5px;width:53.5px;height:28px;background:#f4f4f9;border-radius:7px;"></div>
<svg class="b" style="left:2475.5px;top:1222.5px;" width="14" height="14" viewBox="0 0 14 14"><path d="M0.4 1.6 L6.3 2.6 V13 L0.4 12 Z M13.6 1.6 L7.7 2.6 V13 L13.6 12 Z" fill="#0a6cff"/><path d="M9.4 5.6 H12 M9.4 8.4 H12" stroke="#fff" stroke-width="1.2"/></svg>
<div class="t" style="left:2493.5px;top:1219.5px;font-size:10.71px;color:#2a2a2a;">游记</div>
<div class="b" style="left:2272px;top:1255.5px;width:379.5px;height:100px;background:#f5f5fa;border-radius:6px;"></div>
<div class="t" style="left:2287.5px;top:1266.5px;font-size:12.36px;color:#8c8c8c;">请输入消息</div>
<div class="b" style="left:2705.5px;top:442.5px;width:429.5px;height:900px;background:#fff;border-radius:0 14px 0 0;"></div>
<div class="t" style="left:2720px;top:454.1px;font-size:12.36px;color:#505050;">详情</div>
<div class="t" style="left:2766.5px;top:454.1px;font-size:12.36px;color:#505050;">聊天室</div>
<div class="t" style="left:2825px;top:454.1px;font-size:12.36px;color:#0052d9;">相关投诉</div>
<div class="b" style="left:2825px;top:481.5px;width:50px;height:3px;background:#0052d9;"></div>
<div class="b" style="left:2705.5px;top:484px;width:428px;height:2px;background:#f3f3f3;"></div>
<svg class="b" style="left:3107px;top:458.4px;" width="10" height="10" viewBox="0 0 10 10"><path d="M1.5 1.5 L8.5 8.5 M8.5 1.5 L1.5 8.5" stroke="#222" stroke-width="1.7"/></svg>
<div class="b" style="left:2719px;top:500.5px;width:400.5px;height:47px;background:#dbe2fc;border-radius:5px;"></div>
<div class="b" style="left:2741.5px;top:516.5px;width:15px;height:15px;background:#0052d9;border-radius:50%;"></div>
<svg class="b" style="left:2741.5px;top:516.5px;" width="15" height="15" viewBox="0 0 15 15"><circle cx="7.5" cy="4.3" r="1.1" fill="#fff"/><rect x="6.6" y="6.3" width="1.8" height="5" fill="#fff"/></svg>
<div class="t" style="left:2766px;top:514.5px;font-size:12.36px;color:#1f1f1f;">该商家累计投诉10次</div>
<div class="b" style="left:2719px;top:562.4px;width:400.5px;height:201.2px;background:#f3f3f3;border-radius:5px;"></div>
<div class="t" style="left:2791.5px;top:574.3px;font-size:12.36px;color:#adadad;transform:translateX(-100%);">投诉内容：</div><div class="t" style="left:2793.2px;top:574.3px;font-size:12.36px;color:#1f1f1f;">商家服务态度差，订单不能使用</div>
<div class="t" style="left:2791.5px;top:597.9px;font-size:12.36px;color:#adadad;transform:translateX(-100%);">投诉时间：</div><div class="t" style="left:2793.2px;top:597.9px;font-size:12.36px;color:#1f1f1f;"><span class="n">2025<span class="h">-</span>09<span class="h">-</span>02 15:19:27</span></div>
<div class="t" style="left:2791.5px;top:619.1px;font-size:12.36px;color:#adadad;transform:translateX(-100%);">投诉人：</div><div class="t" style="left:2793.2px;top:619.1px;font-size:12.36px;color:#1f1f1f;">张三</div>
<div class="t" style="left:2791.5px;top:640.9px;font-size:12.36px;color:#adadad;transform:translateX(-100%);">处理结果：</div><div class="t" style="left:2793.2px;top:640.9px;font-size:12.36px;color:#d54941;">优惠券补偿</div>
<div class="t" style="left:2791.5px;top:662.7px;font-size:12.36px;color:#adadad;transform:translateX(-100%);">处理人：</div><div class="t" style="left:2793.2px;top:662.7px;font-size:12.36px;color:#1f1f1f;">王五</div>
<div class="t" style="left:2791.5px;top:683.5px;font-size:12.36px;color:#adadad;transform:translateX(-100%);">处理时间：</div><div class="t" style="left:2793.2px;top:683.5px;font-size:12.36px;color:#1f1f1f;"><span class="n">2025<span class="h">-</span>09<span class="h">-</span>02 15:19:27</span></div>
<div class="t" style="left:2791.5px;top:706.9px;font-size:12.36px;color:#adadad;transform:translateX(-100%);">备注：</div><div class="t" style="left:2793.2px;top:706.9px;font-size:12.36px;color:#1f1f1f;">用户情况不满足三倍赔偿，平台给与10元无门槛优惠券补</div>
<div class="t" style="left:2793.2px;top:724.7px;font-size:12.36px;color:#1f1f1f;">充，驳回其他诉求</div>
<div class="b" style="left:2719px;top:778.6px;width:400.5px;height:183.6px;background:#f3f3f3;border-radius:5px;"></div>
<div class="t" style="left:2791.5px;top:790.5px;font-size:12.36px;color:#adadad;transform:translateX(-100%);">投诉内容：</div><div class="t" style="left:2793.2px;top:790.5px;font-size:12.36px;color:#1f1f1f;">商家服务态度差，订单不能使用</div>
<div class="t" style="left:2791.5px;top:814.1px;font-size:12.36px;color:#adadad;transform:translateX(-100%);">投诉时间：</div><div class="t" style="left:2793.2px;top:814.1px;font-size:12.36px;color:#1f1f1f;"><span class="n">2025<span class="h">-</span>09<span class="h">-</span>02 15:19:27</span></div>
<div class="t" style="left:2791.5px;top:835.3px;font-size:12.36px;color:#adadad;transform:translateX(-100%);">投诉人：</div><div class="t" style="left:2793.2px;top:835.3px;font-size:12.36px;color:#1f1f1f;">张三</div>
<div class="t" style="left:2791.5px;top:857.1px;font-size:12.36px;color:#adadad;transform:translateX(-100%);">处理结果：</div><div class="t" style="left:2793.2px;top:857.1px;font-size:12.36px;color:#d54941;">优惠券补偿</div>
<div class="t" style="left:2791.5px;top:878.9px;font-size:12.36px;color:#adadad;transform:translateX(-100%);">处理人：</div><div class="t" style="left:2793.2px;top:878.9px;font-size:12.36px;color:#1f1f1f;">王五</div>
<div class="t" style="left:2791.5px;top:899.7px;font-size:12.36px;color:#adadad;transform:translateX(-100%);">处理时间：</div><div class="t" style="left:2793.2px;top:899.7px;font-size:12.36px;color:#1f1f1f;"><span class="n">2025<span class="h">-</span>09<span class="h">-</span>02 15:19:27</span></div>
<div class="t" style="left:2791.5px;top:921.1px;font-size:12.36px;color:#adadad;transform:translateX(-100%);">备注：</div><div class="t" style="left:2793.2px;top:921.1px;font-size:12.36px;color:#1f1f1f;">-</div>
<div class="b" style="left:2719px;top:978.4px;width:400.5px;height:200.4px;background:#f3f3f3;border-radius:5px;"></div>
<div class="t" style="left:2791.5px;top:990.3px;font-size:12.36px;color:#adadad;transform:translateX(-100%);">投诉内容：</div><div class="t" style="left:2793.2px;top:990.3px;font-size:12.36px;color:#1f1f1f;">商家服务态度差，订单不能使用</div>
<div class="t" style="left:2791.5px;top:1013.9px;font-size:12.36px;color:#adadad;transform:translateX(-100%);">投诉时间：</div><div class="t" style="left:2793.2px;top:1013.9px;font-size:12.36px;color:#1f1f1f;"><span class="n">2025<span class="h">-</span>09<span class="h">-</span>02 15:19:27</span></div>
<div class="t" style="left:2791.5px;top:1035.1px;font-size:12.36px;color:#adadad;transform:translateX(-100%);">投诉人：</div><div class="t" style="left:2793.2px;top:1035.1px;font-size:12.36px;color:#1f1f1f;">张三</div>
<div class="t" style="left:2791.5px;top:1056.9px;font-size:12.36px;color:#adadad;transform:translateX(-100%);">处理结果：</div><div class="t" style="left:2793.2px;top:1056.9px;font-size:12.36px;color:#d54941;">优惠券补偿</div>
<div class="t" style="left:2791.5px;top:1078.7px;font-size:12.36px;color:#adadad;transform:translateX(-100%);">处理人：</div><div class="t" style="left:2793.2px;top:1078.7px;font-size:12.36px;color:#1f1f1f;">王五</div>
<div class="t" style="left:2791.5px;top:1099.5px;font-size:12.36px;color:#adadad;transform:translateX(-100%);">处理时间：</div><div class="t" style="left:2793.2px;top:1099.5px;font-size:12.36px;color:#1f1f1f;"><span class="n">2025<span class="h">-</span>09<span class="h">-</span>02 15:19:27</span></div>
<div class="t" style="left:2791.5px;top:1122.9px;font-size:12.36px;color:#adadad;transform:translateX(-100%);">备注：</div><div class="t" style="left:2793.2px;top:1122.9px;font-size:12.36px;color:#1f1f1f;">用户情况不满足三倍赔偿，平台给与10元无门槛优惠券补</div>
<div class="t" style="left:2793.2px;top:1140.7px;font-size:12.36px;color:#1f1f1f;">充，驳回其他诉求</div>
<div class="b" style="left:2719px;top:1193.4px;width:400.5px;height:201px;background:#f3f3f3;border-radius:5px;"></div>
<div class="t" style="left:2791.5px;top:1205.3px;font-size:12.36px;color:#adadad;transform:translateX(-100%);">投诉内容：</div><div class="t" style="left:2793.2px;top:1205.3px;font-size:12.36px;color:#1f1f1f;">商家服务态度差，订单不能使用</div>
<div class="t" style="left:2791.5px;top:1228.9px;font-size:12.36px;color:#adadad;transform:translateX(-100%);">投诉时间：</div><div class="t" style="left:2793.2px;top:1228.9px;font-size:12.36px;color:#1f1f1f;"><span class="n">2025<span class="h">-</span>09<span class="h">-</span>02 15:19:27</span></div>
<div class="t" style="left:2791.5px;top:1250.1px;font-size:12.36px;color:#adadad;transform:translateX(-100%);">投诉人：</div><div class="t" style="left:2793.2px;top:1250.1px;font-size:12.36px;color:#1f1f1f;">张三</div>
<div class="t" style="left:2791.5px;top:1271.9px;font-size:12.36px;color:#adadad;transform:translateX(-100%);">处理结果：</div><div class="t" style="left:2793.2px;top:1271.9px;font-size:12.36px;color:#d54941;">优惠券补偿</div>
<div class="t" style="left:2791.5px;top:1293.7px;font-size:12.36px;color:#adadad;transform:translateX(-100%);">处理人：</div><div class="t" style="left:2793.2px;top:1293.7px;font-size:12.36px;color:#1f1f1f;">王五</div>
<div class="t" style="left:2791.5px;top:1314.5px;font-size:12.36px;color:#adadad;transform:translateX(-100%);">处理时间：</div><div class="t" style="left:2793.2px;top:1314.5px;font-size:12.36px;color:#1f1f1f;"><span class="n">2025<span class="h">-</span>09<span class="h">-</span>02 15:19:27</span></div>
<div class="t" style="left:2791.5px;top:1337.9px;font-size:12.36px;color:#adadad;transform:translateX(-100%);">备注：</div><div class="t" style="left:2793.2px;top:1337.9px;font-size:12.36px;color:#1f1f1f;">用户情况不满足三倍赔偿，平台给与10元无门槛优惠券补</div>
<div class="t" style="left:2793.2px;top:1355.7px;font-size:12.36px;color:#1f1f1f;">充，驳回其他诉求</div>
</div></body></html>
